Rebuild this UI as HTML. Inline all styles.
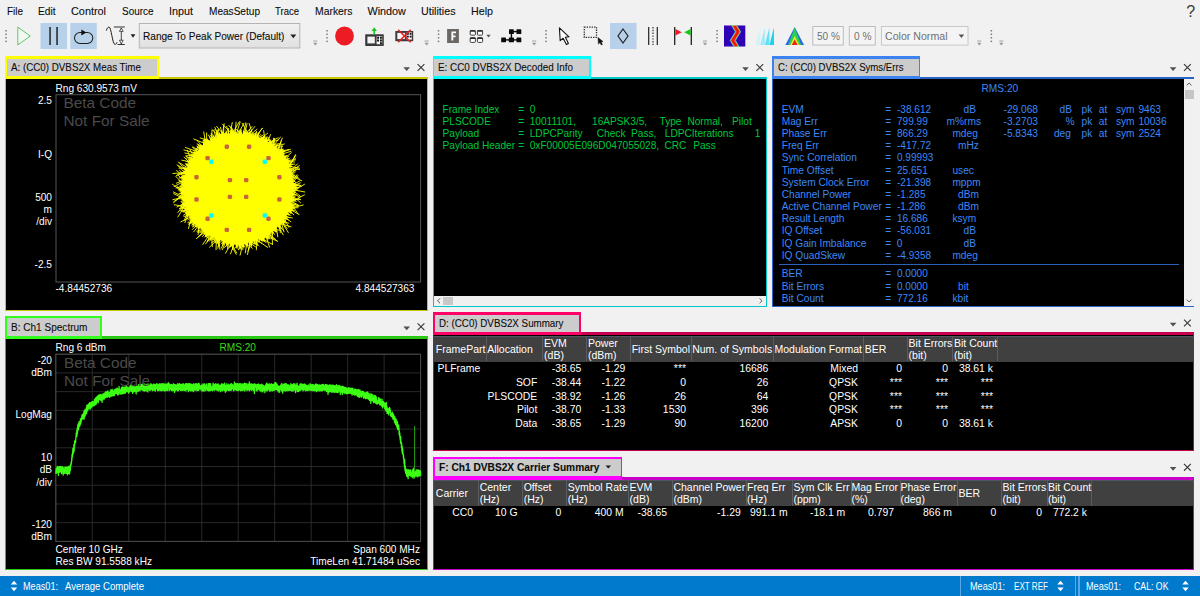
<!DOCTYPE html>
<html lang="en"><head><meta charset="utf-8"><title>VSA DVBS2X</title>
<style>
html,body{margin:0;padding:0;}
body{width:1200px;height:596px;overflow:hidden;background:#f1f1f1;position:relative;font-family:"Liberation Sans",sans-serif;color:#1e1e1e;}
.t{position:absolute;line-height:1;white-space:pre;transform-origin:0 0;}
.u{-webkit-text-stroke:0.1px currentColor;}
.b{position:absolute;}
svg{position:absolute;left:0;top:0;overflow:visible;}
</style></head><body>
<span class="t u" style="top:6px;font-size:10.8px;transform:scaleX(0.9194);left:7.00px;color:#0c0c0c;">File</span>
<span class="t u" style="top:6px;font-size:10.8px;transform:scaleX(0.9403);left:38.00px;color:#0c0c0c;">Edit</span>
<span class="t u" style="top:6px;font-size:10.8px;transform:scaleX(1.0053);left:71.00px;color:#0c0c0c;">Control</span>
<span class="t u" style="top:6px;font-size:10.8px;transform:scaleX(0.9205);left:121.50px;color:#0c0c0c;">Source</span>
<span class="t u" style="top:6px;font-size:10.8px;left:169.00px;color:#0c0c0c;">Input</span>
<span class="t u" style="top:6px;font-size:10.8px;transform:scaleX(0.9335);left:209.00px;color:#0c0c0c;">MeasSetup</span>
<span class="t u" style="top:6px;font-size:10.8px;transform:scaleX(0.8821);left:275.00px;color:#0c0c0c;">Trace</span>
<span class="t u" style="top:6px;font-size:10.8px;transform:scaleX(0.9614);left:314.50px;color:#0c0c0c;">Markers</span>
<span class="t u" style="top:6px;font-size:10.8px;left:367.50px;color:#0c0c0c;">Window</span>
<span class="t u" style="top:6px;font-size:10.8px;transform:scaleX(0.9912);left:421.00px;color:#0c0c0c;">Utilities</span>
<span class="t u" style="top:6px;font-size:10.8px;transform:scaleX(0.9904);left:471.00px;color:#0c0c0c;">Help</span>
<span class="t" style="top:4px;font-size:16px;left:1186.30px;color:#3a3a3a;">?</span>
<svg width="1200" height="596"><rect x="5.3" y="30.0" width="1.5" height="1.5" fill="#7c7c7c"/><rect x="5.3" y="33.55" width="1.5" height="1.5" fill="#7c7c7c"/><rect x="5.3" y="37.1" width="1.5" height="1.5" fill="#7c7c7c"/><rect x="5.3" y="40.65" width="1.5" height="1.5" fill="#7c7c7c"/><path d="M17.8 27.1 L30.3 36.1 L17.8 44.9 Z" fill="#f4f8f4" stroke="#46be50" stroke-width="0.85" stroke-linejoin="round"/><rect x="40.5" y="23" width="26.5" height="26" fill="#b8d1ea"/><rect x="49.3" y="27" width="1.5" height="18" fill="#222"/><rect x="56.3" y="27" width="1.5" height="18" fill="#222"/><rect x="70.3" y="23" width="26.5" height="26" fill="#b8d1ea"/><rect x="74.5" y="32.4" width="18.3" height="11" rx="5.5" fill="none" stroke="#1e1e1e" stroke-width="1.05"/><path d="M81.3 29.5 L86.4 32.4 L81.3 35.4 Z" fill="#111"/><path d="M106.3 30.6 C107.3 27.6 108.3 27 109 27 C111.4 27 112.3 44.4 115 44.4 C116 44.4 116.6 43.6 117.2 42.2" fill="none" stroke="#1e1e1e" stroke-width="1"/><path d="M113.8 27 H124.8 M117.6 44.5 H124.8" stroke="#1e1e1e" stroke-width="0.9"/><path d="M121.3 28 V44" stroke="#1e1e1e" stroke-width="0.8"/><path d="M121.3 28 L123.2 31.4 H119.4 Z M121.3 43.8 L123.2 40.2 H119.4 Z" fill="#f0f0f0" stroke="#1e1e1e" stroke-width="0.7"/><path d="M130.6 34.3 h4.8 l-2.4 3.4z" fill="#1e1e1e"/><defs><linearGradient id="cg" x1="0" y1="0" x2="0" y2="1"><stop offset="0" stop-color="#f1f1f1"/><stop offset="1" stop-color="#e0e0e0"/></linearGradient></defs><rect x="139.3" y="23.5" width="160.5" height="24.5" fill="url(#cg)" stroke="#b4b4b4" stroke-width="1"/><path d="M290.3 34.6 h6 l-3 3.6z" fill="#222"/><path d="M313.3 41 h4" stroke="#9a9a9a" stroke-width="0.9"/><path d="M313.1 42.8 h4.4 l-2.2 2.8z" fill="#9a9a9a"/><rect x="326.3" y="30.0" width="1.5" height="1.5" fill="#7c7c7c"/><rect x="326.3" y="33.55" width="1.5" height="1.5" fill="#7c7c7c"/><rect x="326.3" y="37.1" width="1.5" height="1.5" fill="#7c7c7c"/><rect x="326.3" y="40.65" width="1.5" height="1.5" fill="#7c7c7c"/><circle cx="344.5" cy="36" r="9.4" fill="#ed1c24"/><rect x="365.2" y="34.3" width="18.6" height="11.6" rx="0.6" fill="#3a3a3a"/><rect x="367.4" y="36.6" width="7.4" height="6.8" fill="#f4f4f4"/><rect x="376.6" y="36.2" width="5.6" height="8" fill="#f4f4f4"/><path d="M377.1 36.8h1.9v1.9h-1.9z M380 36.8h1.9v1.9h-1.9z M377.1 39.6h1.9v1.9h-1.9z M380 39.6h1.9v1.9h-1.9z M380 42.3h1.9v1.7h-1.9z" fill="#111"/><path d="M374.2 27.2 l2.8 3.8 h-2 v3.6 h-1.6 v-3.6 h-2z" fill="#1ec81e"/><rect x="395.3" y="30.9" width="17.9" height="10.3" rx="0.6" fill="#3c3c3c"/><rect x="397.3" y="32.9" width="7.6" height="6.2" fill="#f4f4f4"/><rect x="406.6" y="32.4" width="5.2" height="7.2" fill="#f4f4f4"/><path d="M407 33h1.8v1.8h-1.8z M409.7 33h1.8v1.8h-1.8z M407 35.8h1.8v1.8h-1.8z M409.7 35.8h1.8v1.8h-1.8z" fill="#111"/><path d="M398.2 29.7 L410.6 42.3 M410.6 29.7 L398.2 42.3" stroke="#ed1c24" stroke-width="1.5" fill="none"/><path d="M424.6 41 h4" stroke="#9a9a9a" stroke-width="0.9"/><path d="M424.40000000000003 42.8 h4.4 l-2.2 2.8z" fill="#9a9a9a"/><rect x="437.8" y="30.0" width="1.5" height="1.5" fill="#7c7c7c"/><rect x="437.8" y="33.55" width="1.5" height="1.5" fill="#7c7c7c"/><rect x="437.8" y="37.1" width="1.5" height="1.5" fill="#7c7c7c"/><rect x="437.8" y="40.65" width="1.5" height="1.5" fill="#7c7c7c"/><rect x="447.1" y="29" width="11.8" height="14" fill="#6a6764"/><path d="M451.4 32.4 h4.6 M452.3 31.6 v9 M451.6 36.4 h3.9" stroke="#fff" stroke-width="1.8" fill="none"/><rect x="470.2" y="30.5" width="5.2" height="4.7" rx="1" fill="#fff" stroke="#2a2a2a" stroke-width="0.9"/><rect x="469.9" y="30.2" width="5.8" height="1.5" rx="0.7" fill="#2a2a2a"/><rect x="477.4" y="30.5" width="5.2" height="4.7" rx="1" fill="#fff" stroke="#2a2a2a" stroke-width="0.9"/><rect x="477.09999999999997" y="30.2" width="5.8" height="1.5" rx="0.7" fill="#2a2a2a"/><rect x="470.2" y="37.7" width="5.2" height="4.7" rx="1" fill="#fff" stroke="#2a2a2a" stroke-width="0.9"/><rect x="469.9" y="37.400000000000006" width="5.8" height="1.5" rx="0.7" fill="#2a2a2a"/><rect x="477.4" y="37.7" width="5.2" height="4.7" rx="1" fill="#fff" stroke="#2a2a2a" stroke-width="0.9"/><rect x="477.09999999999997" y="37.400000000000006" width="5.8" height="1.5" rx="0.7" fill="#2a2a2a"/><path d="M486.4 34.8 h4.2 l-2.1 2.6z" fill="#505050"/><g fill="#0a0a0a"><rect x="509" y="29.2" width="4.8" height="4.8" rx="0.6"/><rect x="516.5" y="29.2" width="4.8" height="4.8" rx="0.6"/><rect x="501.2" y="37.5" width="4.8" height="4.8" rx="0.6"/><rect x="508.8" y="37.5" width="5.2" height="4.8" rx="0.6"/><rect x="516.5" y="37.5" width="4.8" height="4.8" rx="0.6"/><rect x="503" y="39.2" width="16" height="1.4"/><rect x="511" y="30.9" width="8" height="1.4"/><rect x="510.7" y="31" width="1.4" height="8"/></g><path d="M532.2 41 h4" stroke="#9a9a9a" stroke-width="0.9"/><path d="M532.0 42.8 h4.4 l-2.2 2.8z" fill="#9a9a9a"/><rect x="545.3" y="30.0" width="1.5" height="1.5" fill="#7c7c7c"/><rect x="545.3" y="33.55" width="1.5" height="1.5" fill="#7c7c7c"/><rect x="545.3" y="37.1" width="1.5" height="1.5" fill="#7c7c7c"/><rect x="545.3" y="40.65" width="1.5" height="1.5" fill="#7c7c7c"/><path d="M559.4 27.8 L560.2 40.6 L563.2 38.3 L566.4 44.5 L568.4 43.5 L565.4 37.3 L569 36.8 Z" fill="#fff" stroke="#111" stroke-width="1.1" stroke-linejoin="round"/><rect x="584.3" y="27.1" width="12.2" height="10.2" fill="none" stroke="#2a2a2a" stroke-width="1.3" stroke-dasharray="1.3 1.15"/><path d="M598 37.6 L598.4 44 L600 42.6 L601.2 45 L602.4 44.4 L601.2 42 L603 41.6 Z" fill="#111" stroke="#111" stroke-width="0.5"/><rect x="610" y="23" width="26.5" height="26" fill="#b8d1ea"/><path d="M623 29 L628 36 L623 43 L618 36 Z" fill="none" stroke="#222" stroke-width="1.2"/><path d="M648.7 27 v18 M657.3 27 v18" stroke="#222" stroke-width="1.2"/><path d="M653 27 v18" stroke="#222" stroke-width="1.1" stroke-dasharray="1.4 1.4"/><path d="M674.7 27 v18 M691.3 27 v18" stroke="#222" stroke-width="1.3"/><path d="M675.4 29 l6.4 3.2 l-6.4 3.2z" fill="#ed1c24"/><path d="M690.6 29 l-6.4 3.2 l6.4 3.2z" fill="#14c814"/><path d="M703 41 h4" stroke="#9a9a9a" stroke-width="0.9"/><path d="M702.8 42.8 h4.4 l-2.2 2.8z" fill="#9a9a9a"/><rect x="716.3" y="30.0" width="1.5" height="1.5" fill="#7c7c7c"/><rect x="716.3" y="33.55" width="1.5" height="1.5" fill="#7c7c7c"/><rect x="716.3" y="37.1" width="1.5" height="1.5" fill="#7c7c7c"/><rect x="716.3" y="40.65" width="1.5" height="1.5" fill="#7c7c7c"/><rect x="724" y="25.5" width="21.3" height="21" fill="#3000b4"/><path d="M731.6 25.5 L735.4 31.8 L730.2 40.4 L733.8 46.5 H739 L735.4 40.4 L740.6 31.8 L736.8 25.5 Z" fill="#f01414" stroke="#3cd2c8" stroke-width="1" stroke-linejoin="round"/><path d="M732.4 25.5 L736.1 31.8 L730.9 40.4 L734.5 46.5 H738.3 L734.7 40.4 L739.9 31.8 L736.1 25.5 Z" fill="#f01414" stroke="#e6dc28" stroke-width="0.5" stroke-linejoin="round"/><path d="M755.6 44.9 L760.2 27.2 V44.9 Z" fill="#d2f3fa"/><path d="M760.2 44.9 L764.8 27.2 V44.9 Z" fill="#a0eaf6"/><path d="M764.8 44.9 L769.4 27.2 V44.9 Z" fill="#64dff3"/><path d="M769.4 44.9 L774 27.2 V44.9 Z" fill="#1ed2f0"/><path d="M794.7 27 L804 45 H785.4 Z" fill="#2864f0"/><path d="M794.7 27.4 L801.2 45 H788.2 Z" fill="#28d250"/><path d="M794.7 33 L801 45 H788.4 Z" fill="#2864f0" opacity="0"/><path d="M794.7 36 L799.2 45 H790.2 Z" fill="#f0e61e"/><path d="M794.7 39.5 L797.6 45 H791.8 Z" fill="#ed1c24"/><rect x="812.8" y="26.5" width="30.5" height="18.6" fill="#f4f4f4" stroke="#bdbdbd"/><rect x="849.3" y="26.5" width="26" height="18.6" fill="#f4f4f4" stroke="#bdbdbd"/><rect x="881.5" y="26.5" width="86.5" height="18.6" fill="#f4f4f4" stroke="#c8c8c8"/><path d="M958.6 34.6 h5.6 l-2.8 3.4z" fill="#555"/><path d="M977.3 41 h4" stroke="#9a9a9a" stroke-width="0.9"/><path d="M977.0999999999999 42.8 h4.4 l-2.2 2.8z" fill="#9a9a9a"/><rect x="990.5999999999999" y="30.0" width="1.5" height="1.5" fill="#7c7c7c"/><rect x="990.5999999999999" y="33.55" width="1.5" height="1.5" fill="#7c7c7c"/><rect x="990.5999999999999" y="37.1" width="1.5" height="1.5" fill="#7c7c7c"/><rect x="990.5999999999999" y="40.65" width="1.5" height="1.5" fill="#7c7c7c"/><path d="M999.3 41 h4" stroke="#9a9a9a" stroke-width="0.9"/><path d="M999.0999999999999 42.8 h4.4 l-2.2 2.8z" fill="#9a9a9a"/></svg>
<span class="t u" style="top:31px;font-size:10.8px;transform:scaleX(0.9329);left:143.00px;color:#0c0c0c;">Range To Peak Power (Default)</span>
<span class="t" style="top:31px;font-size:10.8px;transform:scaleX(0.9343);left:816.50px;color:#707070;">50 %</span>
<span class="t" style="top:31px;font-size:10.8px;transform:scaleX(0.9404);left:853.50px;color:#707070;">0 %</span>
<span class="t" style="top:31px;font-size:10.8px;transform:scaleX(0.9825);left:885.00px;color:#707070;">Color Normal</span>
<div class="b" style="left:5.40px;top:76.70px;width:422.60px;height:233.90px;background:#c8c800;"></div>
<div class="b" style="left:6.40px;top:79.30px;width:420.60px;height:230.30px;background:#000;"></div>
<div class="b" style="left:5.40px;top:56.10px;width:153.30px;height:23.20px;background:#ffff00;"></div>
<div class="b" style="left:7.10px;top:58.80px;width:149.90px;height:17.60px;background:#cccccc;"></div>
<span class="t u" style="top:62px;font-size:10.8px;transform:scaleX(0.9063);left:11.00px;color:#0c0c0c;">A: (CC0) DVBS2X Meas Time</span>
<svg width="1200" height="596"><path d="M403.4 67.2 h6.6 l-3.3 3.8z" fill="#505050"/><path d="M417.6 64.1 l6.8 6.8 M424.4 64.1 l-6.8 6.8" stroke="#3a3a3a" stroke-width="1.15" fill="none"/></svg>
<div class="b" style="left:432.60px;top:76.70px;width:334.20px;height:230.30px;background:#00c8c8;"></div>
<div class="b" style="left:433.60px;top:79.30px;width:332.20px;height:226.70px;background:#000;"></div>
<div class="b" style="left:432.60px;top:56.10px;width:158.40px;height:23.20px;background:#00ffff;"></div>
<div class="b" style="left:434.30px;top:58.80px;width:155.00px;height:17.60px;background:#cccccc;"></div>
<span class="t u" style="top:62px;font-size:10.8px;transform:scaleX(0.9141);left:438.20px;color:#0c0c0c;">E: CC0 DVBS2X Decoded Info</span>
<svg width="1200" height="596"><path d="M742.1999999999999 67.2 h6.6 l-3.3 3.8z" fill="#505050"/><path d="M756.4 64.1 l6.8 6.8 M763.1999999999999 64.1 l-6.8 6.8" stroke="#3a3a3a" stroke-width="1.15" fill="none"/></svg>
<div class="b" style="left:772.30px;top:76.70px;width:422.10px;height:230.30px;background:#2864c8;"></div>
<div class="b" style="left:773.30px;top:79.30px;width:420.10px;height:226.70px;background:#000;"></div>
<div class="b" style="left:772.30px;top:56.10px;width:148.20px;height:23.20px;background:#3c82f0;"></div>
<div class="b" style="left:774.00px;top:58.80px;width:144.80px;height:17.60px;background:#cccccc;"></div>
<span class="t u" style="top:62px;font-size:10.8px;transform:scaleX(0.8899);left:777.50px;color:#0c0c0c;">C: (CC0) DVBS2X Syms/Errs</span>
<svg width="1200" height="596"><path d="M1169.8000000000002 67.2 h6.6 l-3.3 3.8z" fill="#505050"/><path d="M1184.0 64.1 l6.8 6.8 M1190.8000000000002 64.1 l-6.8 6.8" stroke="#3a3a3a" stroke-width="1.15" fill="none"/></svg>
<div class="b" style="left:5.40px;top:336.00px;width:422.60px;height:234.10px;background:#28c814;"></div>
<div class="b" style="left:6.40px;top:339.10px;width:420.60px;height:230.00px;background:#000;"></div>
<div class="b" style="left:5.40px;top:316.20px;width:96.60px;height:22.90px;background:#32ff1e;"></div>
<div class="b" style="left:7.10px;top:318.10px;width:93.20px;height:17.60px;background:#cccccc;"></div>
<span class="t u" style="top:322px;font-size:10.8px;transform:scaleX(0.9302);left:11.00px;color:#0c0c0c;">B: Ch1 Spectrum</span>
<svg width="1200" height="596"><path d="M403.4 326.49999999999994 h6.6 l-3.3 3.8z" fill="#505050"/><path d="M417.6 323.4 l6.8 6.8 M424.4 323.4 l-6.8 6.8" stroke="#3a3a3a" stroke-width="1.15" fill="none"/></svg>
<div class="b" style="left:432.80px;top:331.90px;width:761.60px;height:119.60px;background:#c80050;"></div>
<div class="b" style="left:433.80px;top:335.40px;width:759.60px;height:115.10px;background:#000;"></div>
<div class="b" style="left:432.80px;top:312.40px;width:147.80px;height:23.00px;background:#ff0066;"></div>
<div class="b" style="left:434.50px;top:314.60px;width:144.40px;height:17.00px;background:#cccccc;"></div>
<span class="t u" style="top:318px;font-size:10.8px;transform:scaleX(0.9059);left:438.50px;color:#0c0c0c;">D: (CC0) DVBS2X Summary</span>
<svg width="1200" height="596"><path d="M1169.8000000000002 322.7 h6.6 l-3.3 3.8z" fill="#505050"/><path d="M1184.0 319.6 l6.8 6.8 M1190.8000000000002 319.6 l-6.8 6.8" stroke="#3a3a3a" stroke-width="1.15" fill="none"/></svg>
<div class="b" style="left:432.80px;top:476.50px;width:761.60px;height:93.40px;background:#c800c8;"></div>
<div class="b" style="left:433.80px;top:479.60px;width:759.60px;height:89.30px;background:#000;"></div>
<div class="b" style="left:432.80px;top:456.70px;width:189.70px;height:22.90px;background:#ff00ff;"></div>
<div class="b" style="left:434.50px;top:458.70px;width:186.30px;height:17.50px;background:#cccccc;"></div>
<span class="t u" style="top:462px;font-size:10.8px;transform:scaleX(0.9416);left:438.50px;color:#0c0c0c;font-weight:bold;">F: Ch1 DVBS2X Carrier Summary</span>
<svg width="1200" height="596"><path d="M605.5 465.4 h5.6 l-2.8 3.2z" fill="#1e1e1e"/></svg>
<svg width="1200" height="596"><path d="M1169.8000000000002 467.04999999999995 h6.6 l-3.3 3.8z" fill="#505050"/><path d="M1184.0 463.95 l6.8 6.8 M1190.8000000000002 463.95 l-6.8 6.8" stroke="#3a3a3a" stroke-width="1.15" fill="none"/></svg>
<svg width="1200" height="596"><rect x="56" y="94.7" width="364.6" height="187.3" fill="none" stroke="#555" stroke-width="1"/><circle cx="238.2" cy="188.5" r="55" fill="#ffff00"/><path d="M287.6 196.2L293.2 188.4M287.7 181.6L295.7 189.0M287.6 180.8L293.9 189.9M287.8 182.4L298.1 190.6M286.4 201.8L295.5 191.3M288.2 189.0L305.2 192.0M287.4 197.3L293.6 192.5M287.6 181.0L295.3 193.0M285.6 204.4L304.8 194.7M285.6 204.5L292.8 194.7M288.2 187.2L300.9 196.6M285.8 203.8L295.8 195.7M288.2 189.4L300.2 197.7M285.8 203.9L299.6 198.3M285.1 205.9L293.5 198.3M287.2 198.5L301.0 199.6M287.2 198.2L297.5 199.7M288.1 191.2L292.0 200.2M288.1 191.5L300.9 203.0M288.1 191.5L296.4 201.8M285.3 205.2L291.7 201.5M283.3 210.1L303.6 204.9M287.1 198.8L299.1 205.5M286.4 201.9L298.8 206.0M287.2 198.3L296.7 205.4M281.6 213.4L293.7 205.9M284.2 208.1L298.4 207.7M287.5 196.8L290.5 206.3M287.3 197.8L291.0 207.6M285.1 205.9L294.3 208.7M285.2 205.7L289.8 207.5M281.8 213.0L294.8 210.3M285.4 204.9L293.2 210.4M284.9 206.3L299.4 214.7M287.4 197.4L298.1 214.2M286.5 201.6L291.0 212.1M285.7 204.1L291.9 213.7M285.0 206.2L294.1 215.2M285.9 203.5L291.0 214.0M286.0 203.2L288.0 214.0M284.4 207.6L288.6 215.4M280.1 215.8L292.7 218.0M282.6 211.5L287.4 216.2M280.8 214.7L289.8 217.8M282.7 211.3L285.7 216.6M277.5 219.4L285.2 217.2M281.2 214.0L287.3 219.2M280.7 214.8L291.2 222.0M282.1 212.5L284.4 218.4M277.7 219.2L289.1 223.4M277.6 219.2L283.2 220.2M283.1 210.6L285.6 221.6M275.3 222.0L291.4 226.9M280.8 214.7L282.2 221.8M281.9 212.9L281.8 222.2M281.4 213.7L289.0 227.6M282.3 212.0L281.1 222.9M279.1 217.3L287.3 228.9M282.0 212.7L280.4 223.9M275.1 222.2L280.8 224.8M278.9 217.5L288.5 232.8M274.5 222.9L278.9 225.9M276.2 221.0L283.1 230.4M279.6 216.5L284.1 232.2M268.9 227.9L281.4 230.7M280.8 214.7L279.5 229.3M275.4 221.9L283.4 235.1M279.9 216.1L280.3 233.2M275.4 221.9L275.7 228.8M270.4 226.8L275.2 229.8M262.9 232.0L275.3 229.6M262.6 232.1L275.0 230.4M277.3 219.6L274.5 231.2M274.9 222.5L273.2 231.1M275.6 221.7L277.8 237.2M258.9 234.0L272.8 232.9M260.0 233.5L277.8 241.3M265.3 230.5L277.7 241.6M260.7 233.1L275.3 238.9M261.7 232.6L271.0 233.8M273.4 224.0L272.0 238.0M256.1 235.2L269.8 235.0M261.9 232.5L270.0 236.5M261.8 232.6L270.3 239.2M271.8 225.5L272.5 244.7M255.6 235.4L272.8 244.5M259.7 233.6L267.7 238.3M268.1 228.6L265.8 236.5M269.2 227.7L267.6 240.9M264.2 231.2L269.7 247.5M254.8 235.7L266.5 242.6M255.9 235.2L265.0 241.4M251.9 236.6L268.2 247.7M256.9 234.9L262.2 239.1M265.6 230.3L263.1 240.7M267.1 229.3L261.3 239.9M256.6 235.0L260.4 240.3M251.5 236.7L262.0 243.6M264.7 230.9L259.4 241.5M261.1 233.0L258.9 241.5M252.1 236.5L259.0 242.4M250.2 237.0L259.3 246.0M243.0 238.3L257.8 245.3M250.6 236.9L257.3 245.0M243.4 238.2L256.8 247.7M248.7 237.4L255.9 243.9M257.6 234.6L256.3 250.2M254.6 235.7L254.3 244.2M248.4 237.4L253.8 244.1M247.7 237.6L252.0 243.0M260.8 233.1L251.2 242.6M240.1 238.5L252.7 248.5M246.1 237.9L250.6 244.1M254.5 235.8L249.6 242.4M251.3 236.8L249.3 246.0M241.0 238.4L248.3 243.1M245.1 238.0L248.8 249.5M254.2 235.9L247.7 251.5M239.4 238.5L246.2 242.9M251.5 236.7L247.4 254.9M236.4 238.5L245.3 247.1M247.8 237.6L245.2 253.3M254.0 235.9L244.0 244.0M236.1 238.5L243.2 250.1M251.8 236.6L241.9 243.8M245.0 238.0L241.3 243.4M237.8 238.5L241.1 249.7M244.1 238.2L240.0 255.5M248.6 237.4L239.7 243.5M245.2 238.0L239.0 249.6M234.5 238.4L238.7 250.3M244.8 238.1L237.5 244.0M227.1 237.2L236.9 253.2M227.0 237.2L236.4 254.7M224.5 236.6L235.2 244.6M246.0 237.9L234.5 243.9M246.1 237.9L234.0 248.6M233.1 238.2L232.4 249.9M227.5 237.3L232.9 243.6M225.3 236.8L232.0 243.2M236.1 238.5L230.4 254.2M235.9 238.4L231.1 244.0M232.1 238.1L230.6 243.7M239.1 238.5L228.8 247.7M221.0 235.4L229.4 243.4M228.2 237.5L227.5 249.4M234.3 238.3L225.3 253.5M230.9 238.0L225.9 246.6M237.0 238.5L226.2 243.2M234.2 238.3L223.8 247.9M222.2 235.9L224.5 242.6M227.6 237.4L222.1 250.1M225.8 236.9L221.3 248.5M233.5 238.3L223.1 242.9M218.4 234.4L219.9 249.7M228.3 237.5L220.7 244.0M218.8 234.6L218.8 247.0M220.1 235.1L217.8 248.7M226.2 237.0L219.3 242.9M216.6 233.6L216.0 250.1M220.7 235.3L217.3 243.1M218.3 234.4L217.1 243.4M209.0 229.1L216.0 243.4M209.1 229.2L216.3 239.2M211.5 230.8L212.3 247.0M214.9 232.7L215.7 239.2M227.9 237.4L214.6 238.5M221.5 235.6L209.2 247.5M208.8 228.9L212.7 239.3M222.0 235.8L211.2 242.8M211.8 230.9L212.5 237.2M224.3 236.5L210.8 240.1M217.7 234.1L211.3 237.2M210.7 230.2L207.7 241.8M214.7 232.6L205.4 244.2M215.6 233.1L206.6 241.6M221.9 235.8L207.3 237.3M211.9 231.0L202.5 244.8M208.4 228.7L206.4 236.4M219.0 234.7L207.4 235.2M208.7 228.9L205.9 235.5M213.9 232.2L205.5 234.3M211.6 230.8L206.0 233.7M209.8 229.6L204.5 233.0M209.8 229.6L202.0 236.8M212.0 231.1L202.7 234.1M203.1 224.2L203.3 232.1M208.6 228.8L196.0 238.9M207.0 227.6L197.9 237.2M200.2 221.0L198.0 234.9M212.1 231.2L199.5 232.1M211.5 230.8L201.1 230.1M212.9 231.6L196.9 232.1M198.5 218.9L198.3 230.7M207.6 228.1L196.5 231.3M198.5 218.9L199.3 227.7M201.2 222.2L193.4 232.2M205.4 226.3L197.6 227.8M194.8 213.3L196.0 227.3M200.5 221.3L192.1 229.8M207.6 228.0L195.2 226.3M194.0 211.8L193.6 226.5M201.0 221.9L192.0 227.1M201.8 222.8L194.6 224.1M193.5 210.9L188.4 228.8M201.4 222.3L195.2 222.8M194.9 213.5L191.7 223.7M195.6 214.7L188.5 224.8M196.2 215.7L189.7 224.3M195.2 214.1L193.5 220.6M201.2 222.1L187.5 222.8M198.7 219.2L190.7 220.0M191.5 206.4L184.7 223.0M199.7 220.3L191.6 217.7M191.9 207.3L190.4 218.1M190.8 204.5L184.1 220.8M195.4 214.4L180.5 222.1M190.6 203.8L186.9 218.3M199.9 220.6L188.3 216.1M192.2 208.0L189.6 215.2M189.9 201.3L186.7 215.8M195.5 214.5L183.6 216.5M194.0 211.9L186.1 214.4M192.7 209.2L183.3 215.4M189.3 198.9L177.7 217.2M190.3 202.9L186.1 212.2M190.2 202.5L183.2 212.5M192.1 208.0L186.0 210.2M189.2 198.7L177.6 212.7M196.8 216.6L180.9 210.6M194.0 212.0L180.1 210.7M189.5 199.9L181.6 209.7M191.3 205.8L179.0 208.7M188.7 195.8L179.9 208.8M194.6 212.9L181.1 207.0M188.8 196.5L180.6 206.7M189.8 200.9L176.6 207.1M189.0 197.6L184.4 203.8M188.4 192.9L182.2 204.2M192.0 207.7L173.8 204.7M192.0 207.7L181.1 202.1M188.2 188.2L173.3 203.1M188.2 189.3L183.4 200.8M188.4 193.0L173.5 201.7M188.2 190.0L176.7 199.9M188.2 187.1L180.8 198.5M188.8 196.0L172.4 199.8M189.5 200.0L183.8 197.0M189.6 200.3L183.8 196.7M189.8 201.1L183.4 196.1M188.2 189.4L182.5 194.9M188.2 188.4L183.5 193.9M189.2 198.2L182.7 194.3M190.0 201.9L173.3 193.5M188.7 195.2L183.1 192.2M189.6 200.3L173.1 191.8M188.2 186.6L180.1 191.2M189.0 179.6L178.3 190.2M189.5 199.8L182.5 189.4M188.3 184.7L179.0 189.6M188.4 184.4L175.6 188.1M188.2 190.2L176.9 187.6M189.2 178.6L173.8 186.7M188.9 196.7L176.6 186.0M188.3 190.9L179.7 185.9M189.3 177.9L180.7 185.4M188.9 196.9L172.1 184.0M189.3 178.3L176.0 183.3M188.6 194.4L183.0 183.7M188.3 185.5L183.2 182.4M188.3 185.7L183.2 182.1M188.3 185.6L178.5 180.6M189.5 177.1L181.6 180.7M188.4 192.7L179.4 179.8M189.1 178.9L183.1 178.7M190.6 173.1L179.3 178.2M192.0 169.5L175.9 175.8M188.2 189.5L175.6 176.1M190.9 172.3L172.5 173.5M188.2 186.8L177.3 174.1M188.6 182.3L184.6 174.9M189.2 178.7L178.2 173.2M191.9 169.7L181.1 173.1M189.0 179.5L176.2 170.4M188.4 183.7L185.1 173.2M192.8 167.7L185.5 171.8M189.0 179.4L179.2 170.0M192.2 168.9L178.5 168.1M190.1 175.0L186.1 170.7M189.7 176.4L183.3 167.9M189.4 177.5L178.2 165.8M190.9 172.3L176.7 164.8M189.9 175.5L185.5 167.1M190.3 174.3L179.6 163.3M191.7 170.1L177.9 161.9M196.8 160.5L188.0 165.3M191.0 172.1L187.2 164.4M196.7 160.6L188.0 164.7M195.1 163.2L181.4 160.1M191.2 171.3L188.9 163.7M194.4 164.3L189.6 162.6M192.4 168.5L188.2 161.7M191.2 171.6L189.5 161.3M193.4 166.3L183.8 156.9M201.1 155.0L186.1 158.2M197.3 159.7L188.4 158.0M195.9 161.9L185.3 155.8M201.2 154.9L185.9 155.8M194.0 165.2L191.6 158.0M199.9 156.3L184.5 152.9M192.6 168.1L191.3 156.4M201.2 154.8L183.5 149.8M204.9 151.2L193.8 155.7M193.6 165.8L187.2 149.9M202.5 153.5L185.2 147.4M205.1 151.1L193.1 153.2M193.8 165.5L193.8 152.7M196.4 161.1L189.9 149.5M199.2 157.2L194.4 152.1M195.4 162.7L194.0 149.7M201.7 154.3L192.3 147.3M199.7 156.6L195.6 149.2M203.3 152.7L192.4 146.7M200.9 155.2L198.7 150.2M195.6 162.2L196.6 148.0M205.5 150.6L199.5 149.3M209.4 147.7L197.4 147.0M199.7 156.6L197.1 145.8M207.3 149.2L197.6 144.7M207.3 149.2L196.8 143.7M211.4 146.3L193.4 138.8M205.7 150.5L196.9 140.2M211.0 146.6L202.7 145.7M209.6 147.5L203.6 145.6M208.4 148.4L203.8 144.9M202.5 153.5L203.7 143.8M217.1 143.2L199.8 137.8M215.0 144.2L205.4 144.2M213.1 145.3L202.7 140.1M203.1 152.9L204.1 139.4M215.0 144.2L204.2 139.2M201.8 154.2L204.5 139.1M212.0 145.9L208.5 142.2M209.1 147.8L207.5 141.0M207.8 148.8L208.2 140.7M206.6 149.7L203.7 131.5M221.6 141.3L210.0 141.2M206.7 149.7L206.6 132.5M214.5 144.5L208.2 134.7M223.5 140.7L211.9 139.2M216.9 143.3L210.1 134.7M208.6 148.2L213.2 139.5M218.1 142.7L213.7 139.0M214.3 144.6L211.1 132.9M209.5 147.6L214.6 137.2M211.7 146.1L212.0 129.9M223.5 140.7L211.7 129.2M217.2 143.1L213.8 129.8M225.6 140.1L214.6 129.1M221.8 141.3L214.7 127.1M220.0 141.9L216.3 132.2M228.0 139.6L218.1 135.2M227.6 139.6L216.4 126.1M212.1 145.9L217.9 129.6M234.2 138.7L221.1 134.4M214.1 144.7L219.0 128.8M224.5 140.4L220.3 127.0M221.4 141.4L222.9 134.5M216.6 143.4L222.6 132.8M222.4 141.0L223.5 131.3M236.7 138.5L222.1 123.9M217.8 142.9L225.7 132.4M223.6 140.7L223.8 125.3M221.3 141.5L224.2 123.4M220.3 141.8L227.1 131.5M230.1 139.2L226.6 126.0M221.0 141.5L229.3 134.2M228.2 139.5L228.6 128.1M239.2 138.5L228.7 125.2M237.5 138.5L231.0 133.5M237.9 138.5L230.8 126.3M240.9 138.6L232.0 131.1M229.1 139.3L232.3 122.2M238.0 138.5L233.2 132.8M233.8 138.7L234.6 132.3M236.4 138.5L234.7 130.5M247.1 139.3L235.1 128.3M234.8 138.6L236.1 121.8M230.2 139.1L236.5 132.6M239.3 138.5L237.8 132.4M232.3 138.8L238.7 130.4M228.9 139.4L239.5 121.4M234.8 138.6L240.3 121.5M233.1 138.8L240.1 132.6M236.3 138.5L241.3 130.2M252.8 140.7L242.0 122.9M236.1 138.5L242.1 132.1M235.3 138.6L244.1 123.0M250.4 140.0L243.3 131.6M242.1 138.6L245.9 122.4M251.0 140.2L244.3 133.8M239.5 138.5L245.4 133.2M243.4 138.8L247.2 123.2M246.6 139.2L247.0 133.2M254.9 141.4L249.0 123.1M252.8 140.7L249.3 129.5M256.2 141.8L248.8 132.0M246.0 139.1L250.1 132.8M258.9 143.0L249.7 134.7M241.6 138.6L252.3 126.3M242.7 138.7L252.4 130.5M238.8 138.5L251.9 134.7M244.6 138.9L255.0 126.3M252.2 140.5L254.0 132.9M248.3 139.5L253.7 135.6M252.4 140.6L256.7 131.2M245.2 139.0L257.2 129.1M244.3 138.9L257.3 132.5M243.4 138.8L257.2 134.5M246.2 139.1L257.4 135.9M253.6 140.9L259.6 132.6M253.6 140.9L262.3 128.0M251.8 140.4L262.9 127.9M254.4 141.2L261.0 134.2M266.0 147.0L263.6 130.3M264.3 145.9L261.4 136.8M258.2 142.7L262.2 137.3M253.1 140.8L263.6 134.8M250.7 140.1L262.8 137.6M256.6 142.0L263.9 137.5M256.6 142.0L268.0 132.9M251.6 140.3L266.6 136.9M257.6 142.4L265.0 140.2M272.7 152.3L268.2 137.1M257.7 142.5L267.1 139.2M265.7 146.7L270.6 134.2M271.9 151.6L269.6 138.7M268.7 148.9L268.3 142.2M257.3 142.3L269.2 140.3M257.5 142.4L269.3 142.6M273.2 152.8L273.5 137.9M273.4 153.0L274.6 138.0M268.3 148.6L272.4 141.0M267.6 148.1L273.1 141.4M261.5 144.2L271.7 144.8M263.5 145.3L278.5 137.6M275.8 155.5L273.1 144.4M269.9 149.8L280.8 136.7M262.6 144.9L278.5 139.9M275.2 154.9L282.5 137.7M263.1 145.1L277.1 145.2M276.4 156.3L281.5 140.3M271.9 151.6L276.4 147.6M279.2 159.9L276.6 148.7M263.6 145.5L281.4 143.5M274.7 154.3L278.8 148.5M281.0 162.6L281.8 145.1M268.0 148.3L284.7 143.9M270.5 150.3L282.9 146.2M268.9 149.1L279.2 151.6M271.1 150.8L282.5 149.0M273.6 153.2L279.8 152.0M267.9 148.3L283.5 149.6M268.9 149.0L282.2 152.3M279.9 160.9L284.8 150.3M270.4 150.3L285.3 151.1M272.9 152.5L289.1 149.6M274.7 154.3L290.8 149.3M275.4 155.1L283.0 156.3M276.1 155.9L291.4 151.2M274.7 154.3L285.2 156.0M280.6 161.9L291.6 152.4M282.4 165.1L288.7 155.9M280.3 161.5L285.5 158.4M278.1 158.3L285.8 158.7M285.8 173.2L295.6 154.4M279.6 160.5L287.0 159.9M285.2 171.4L296.0 155.1M281.9 164.1L290.3 159.9M284.5 169.6L295.9 157.7M285.8 173.2L292.1 160.8M285.7 173.0L291.5 161.5M280.1 161.2L296.0 159.8M279.9 160.9L294.9 162.0M278.8 159.3L289.7 164.8M287.0 177.8L291.2 164.2M283.3 167.0L292.8 164.4M282.1 164.6L295.2 164.1M286.4 175.2L297.8 163.6M282.8 165.8L292.5 166.6M286.5 175.5L291.5 168.5M286.1 174.2L299.7 165.4M286.9 177.3L298.6 167.1M286.5 175.5L290.5 170.6M282.5 165.2L299.9 168.3M283.5 167.3L299.9 169.7M284.3 169.1L296.3 170.9M285.5 172.3L295.5 172.1M287.8 182.3L292.8 173.2M287.6 180.8L291.8 174.9M288.2 187.9L297.2 174.4M286.3 174.9L295.4 175.2M288.2 189.5L298.2 175.3M288.2 187.3L294.0 176.5M287.6 180.6L294.1 177.8M284.0 168.5L292.8 178.0M287.0 177.4L293.0 179.5M284.9 170.6L299.4 178.6M287.8 182.4L293.3 179.9M286.8 176.7L292.9 181.0M288.2 187.3L300.2 180.7M285.9 173.4L302.1 180.9M285.6 172.6L296.1 182.8M288.2 188.4L300.7 182.7M287.8 194.5L304.9 184.0M288.2 189.1L299.5 184.5M287.7 195.6L301.2 185.1M287.7 181.5L301.6 186.3M287.9 182.9L295.3 187.5M288.2 187.1L298.9 187.8" stroke="#ffff00" stroke-width="0.9" fill="none"/><path d="M262.1 142.3L267.7 136.2L265.4 144.2ZM275.8 152.6L281.8 149.4L278.0 155.0ZM289.6 180.9L296.0 181.3L289.9 183.3ZM268.8 146.5L274.8 141.2L271.2 148.3ZM254.8 139.2L259.2 132.6L258.1 140.5ZM186.8 180.7L178.5 177.2L187.5 177.0ZM280.4 218.9L284.9 224.2L278.6 221.3ZM288.0 173.6L295.0 173.5L288.9 176.8ZM242.1 136.6L244.1 128.7L244.4 136.9ZM214.3 142.3L212.3 133.6L217.8 140.7ZM230.5 239.9L227.9 248.3L228.3 239.5ZM186.5 193.7L180.5 192.2L186.2 189.9ZM196.6 219.7L189.0 223.7L195.2 217.8ZM187.7 201.0L181.4 201.2L187.2 198.7ZM266.0 144.6L271.6 139.1L268.6 146.3ZM187.0 179.2L180.6 176.7L187.5 177.0ZM214.3 234.7L210.8 238.6L212.2 233.5ZM267.4 145.4L273.3 139.7L269.8 147.2ZM290.0 193.1L298.4 195.2L289.7 195.4ZM242.1 240.4L240.5 248.9L238.2 240.5ZM191.0 210.3L182.5 211.1L189.1 205.7ZM191.7 165.2L184.5 160.2L192.8 163.2ZM186.4 184.5L178.9 181.2L186.9 179.8ZM187.0 197.9L179.4 197.5L186.6 194.9ZM229.1 137.3L230.7 129.7L234.2 136.7ZM186.7 181.6L181.3 178.3L187.5 177.1ZM189.5 206.7L183.4 205.9L187.9 201.8ZM186.3 191.4L180.6 190.2L186.2 188.7ZM239.1 240.5L236.6 249.2L234.5 240.4ZM289.3 198.3L296.6 201.5L288.6 201.3ZM190.7 209.8L182.8 211.4L189.6 207.0ZM226.8 239.2L222.3 247.1L222.4 238.1ZM261.3 141.9L267.5 136.2L265.8 144.4ZM238.2 136.5L240.0 128.5L241.2 136.6ZM221.7 139.2L221.1 130.2L225.5 138.1ZM226.1 137.9L226.7 132.0L229.6 137.2ZM186.8 180.8L179.3 177.5L187.5 177.1ZM244.4 240.1L243.3 249.2L240.8 240.4ZM277.5 222.5L282.6 229.4L275.4 224.9ZM287.0 170.7L292.6 171.2L288.4 174.9ZM215.0 142.0L212.6 134.4L216.9 141.0ZM186.2 188.6L179.2 186.9L186.3 185.6ZM283.2 214.6L288.7 219.9L281.5 217.3ZM289.8 182.1L295.9 183.2L290.1 185.4ZM208.8 145.6L206.9 140.2L211.0 144.2ZM283.5 214.0L289.5 220.4L281.1 217.9ZM277.8 222.2L280.9 227.9L275.0 225.2ZM287.2 205.8L291.7 208.9L286.3 208.3ZM244.7 136.9L247.9 131.3L249.0 137.6ZM266.9 231.9L269.0 239.4L263.3 234.0ZM203.5 149.8L201.2 144.2L206.2 147.5ZM238.9 240.5L237.2 246.8L235.8 240.4ZM281.1 159.1L286.8 157.3L282.9 161.9ZM246.3 137.1L249.6 132.3L250.8 138.0ZM279.8 157.2L287.4 155.1L282.5 161.3ZM189.1 205.5L180.5 205.3L187.6 200.5ZM186.4 192.6L179.4 190.3L186.2 187.6ZM219.3 140.1L218.5 132.9L222.4 139.0ZM225.8 138.0L225.7 128.9L229.3 137.3ZM187.8 201.3L180.7 201.8L187.3 199.1ZM259.6 141.1L265.0 134.9L263.2 142.9ZM219.7 139.9L218.7 131.5L223.0 138.8ZM190.6 167.5L186.1 163.2L192.3 164.1ZM206.7 147.1L203.6 140.4L208.9 145.5ZM230.7 240.0L228.1 244.8L227.4 239.4ZM191.4 165.8L186.7 161.0L193.4 162.2ZM200.3 224.1L194.3 227.7L198.5 222.1ZM187.0 179.3L181.5 176.8L187.6 176.6ZM192.1 212.6L184.5 214.2L190.5 209.3ZM247.5 239.7L246.4 247.2L243.3 240.2ZM252.6 238.5L251.6 244.4L248.0 239.6ZM211.2 233.0L205.8 238.1L208.2 231.0ZM186.3 186.0L180.1 184.2L186.4 183.4ZM219.3 140.1L219.2 131.9L224.0 138.5ZM186.3 191.1L177.8 189.4L186.2 187.4ZM289.9 183.0L295.7 184.1L290.1 186.0ZM242.8 136.7L245.5 130.3L246.6 137.2ZM276.7 153.6L281.9 150.6L278.2 155.3ZM290.1 191.7L297.3 195.0L289.6 196.7ZM243.3 240.2L242.1 247.4L239.9 240.5ZM186.4 193.1L178.0 191.0L186.2 188.2ZM192.2 164.3L187.4 158.7L194.6 160.1ZM190.1 208.2L183.6 208.7L188.8 204.9ZM208.9 145.6L207.6 139.3L212.6 143.2ZM203.3 227.0L198.1 229.3L200.2 224.0ZM275.5 152.2L283.7 148.4L278.9 156.1ZM288.6 201.5L296.4 206.5L287.1 206.2ZM277.0 153.9L282.3 152.3L279.7 157.2ZM256.4 237.2L257.8 245.8L253.6 238.2ZM287.6 204.8L293.8 209.4L286.1 208.7ZM187.1 178.9L180.8 176.4L187.6 176.6ZM227.6 137.6L228.7 132.3L231.4 136.9ZM281.8 216.8L286.3 222.4L279.6 220.0ZM240.9 240.4L239.6 248.5L238.0 240.5ZM271.2 148.3L277.2 144.8L274.4 151.2ZM189.0 205.3L182.6 206.1L188.3 203.1ZM197.4 156.3L194.5 151.6L199.7 153.6ZM195.8 218.6L189.8 220.8L194.2 216.2ZM186.6 195.0L177.9 193.4L186.2 190.4ZM221.8 237.9L217.3 244.1L218.0 236.4ZM228.1 137.5L227.9 129.9L230.3 137.1ZM271.6 228.3L275.6 235.7L269.3 230.1ZM190.2 168.6L186.2 164.7L191.8 165.1ZM227.0 239.3L224.7 244.1L224.9 238.8ZM244.1 240.2L242.4 247.4L239.7 240.5ZM289.5 196.9L296.1 199.8L288.9 200.0ZM196.8 157.0L191.5 151.2L198.3 155.2ZM241.1 240.4L239.2 249.0L237.0 240.5ZM265.5 232.7L267.7 239.8L262.7 234.4ZM269.1 230.3L271.3 236.9L266.0 232.4ZM208.3 145.9L204.8 138.0L210.8 144.3ZM289.9 182.6L296.5 184.2L290.2 186.7ZM198.4 221.9L191.7 224.4L195.8 218.6ZM234.4 136.6L235.2 131.3L236.6 136.5ZM209.8 232.1L204.8 236.2L207.0 230.1ZM286.6 169.6L293.0 168.8L287.6 172.2ZM191.7 211.8L185.3 213.0L190.3 208.8ZM186.6 182.3L181.5 179.3L187.3 178.0ZM202.1 151.1L198.0 143.9L204.7 148.8ZM263.7 233.8L265.2 242.0L259.5 236.0ZM277.9 154.9L284.8 150.9L279.4 156.8ZM225.4 238.9L222.2 246.1L223.2 238.3ZM229.7 239.8L226.1 245.8L225.2 238.9ZM289.8 195.3L295.5 198.3L289.1 199.3ZM290.2 187.9L296.4 190.2L290.1 192.2ZM187.8 201.2L179.7 201.5L187.2 198.4ZM224.4 138.4L225.1 132.4L228.3 137.4ZM249.6 137.8L252.3 133.0L252.5 138.5ZM213.8 234.4L208.7 241.3L211.8 233.3ZM194.7 217.0L186.5 220.8L193.5 215.0ZM287.6 172.3L293.2 172.6L288.6 175.9ZM189.3 206.2L181.5 207.2L188.4 203.4ZM187.3 199.0L178.7 199.2L186.8 196.4ZM278.5 155.6L283.6 153.4L280.1 157.7ZM248.1 239.5L247.8 246.9L245.1 240.0ZM187.4 199.6L182.0 199.1L186.8 196.7ZM290.2 188.1L295.7 190.3L290.1 192.2ZM189.2 171.2L183.1 167.8L189.9 169.2ZM238.8 136.5L241.3 131.2L243.1 136.7ZM195.5 218.2L187.8 221.9L194.2 216.2ZM209.3 231.8L204.2 234.5L205.3 228.8ZM198.4 155.0L194.5 149.8L200.2 153.1ZM277.7 154.7L283.4 151.5L279.2 156.6ZM187.7 200.9L180.9 199.9L186.8 196.4ZM287.4 205.5L294.0 210.7L285.6 210.0ZM287.3 205.7L293.7 210.6L285.7 209.8ZM239.0 136.5L241.2 128.1L242.5 136.7ZM205.5 148.1L202.4 141.2L208.2 146.0ZM274.3 226.0L277.7 232.6L271.5 228.5ZM210.8 232.7L204.3 237.9L206.8 230.0ZM186.2 187.4L179.8 185.2L186.4 183.7ZM231.8 136.9L233.6 130.5L236.4 136.5ZM208.9 145.5L206.4 137.8L212.2 143.4ZM286.5 207.7L292.5 213.0L284.6 212.0ZM211.6 143.8L208.6 135.9L213.8 142.6ZM189.0 205.4L180.7 205.2L187.6 200.6ZM283.9 213.2L288.3 217.4L282.5 215.7ZM238.5 240.5L236.6 248.1L235.2 240.4ZM283.3 162.6L291.1 160.8L285.2 166.3ZM280.8 158.7L288.5 154.9L282.0 160.5ZM193.1 214.4L185.3 216.0L191.1 210.6ZM279.9 157.5L285.8 155.7L282.0 160.5ZM279.5 157.0L284.8 154.5L280.8 158.7ZM192.5 213.3L186.9 214.9L191.5 211.3ZM198.6 222.2L191.4 225.3L196.1 219.0ZM269.3 146.8L274.2 142.9L271.6 148.6ZM279.7 157.2L285.2 155.8L282.0 160.5ZM273.1 227.0L277.5 233.9L271.3 228.6ZM262.9 142.7L268.2 138.7L267.1 145.3ZM202.0 151.2L197.5 144.3L204.0 149.4ZM212.2 143.5L210.1 135.9L215.2 141.9ZM188.5 173.2L182.5 168.5L190.1 168.7ZM290.1 186.0L298.5 187.7L290.2 189.7ZM281.6 217.2L286.2 223.8L278.5 221.3ZM250.9 238.9L250.8 244.6L248.3 239.5ZM282.9 215.1L288.2 220.0L281.5 217.4ZM275.8 152.5L283.8 148.7L278.9 156.1ZM186.9 180.0L180.6 176.6L187.7 175.9ZM195.7 218.5L189.0 221.6L194.4 216.6ZM188.3 174.0L181.8 170.4L189.1 171.3ZM262.5 234.5L263.2 241.7L258.1 236.6ZM290.1 184.7L298.0 185.9L290.2 187.8ZM214.7 234.9L209.3 241.9L212.2 233.5ZM194.9 159.7L189.3 153.9L196.6 157.3ZM283.6 163.1L290.2 162.7L285.9 167.7ZM222.1 139.0L222.1 131.6L225.9 138.0ZM278.0 155.1L285.3 150.6L279.4 156.8ZM218.1 236.5L214.5 240.4L215.1 235.1ZM222.1 139.1L222.1 132.2L225.7 138.0ZM266.4 232.2L268.1 238.0L263.8 233.8ZM238.8 240.5L236.3 248.3L234.3 240.4ZM220.9 237.5L216.4 244.8L218.0 236.4ZM262.3 142.4L267.8 136.5L265.5 144.2ZM242.9 136.7L245.2 128.8L245.6 137.0ZM279.3 156.6L285.1 153.7L280.6 158.4ZM290.0 183.7L299.1 185.3L290.2 187.9ZM288.8 200.4L293.1 203.9L287.6 204.7ZM217.1 141.0L216.5 132.2L221.9 139.1ZM200.8 152.3L196.2 145.3L203.1 150.1ZM195.8 218.6L188.7 221.5L194.1 216.1ZM207.4 146.6L204.0 138.5L210.3 144.6ZM277.3 154.3L284.5 150.2L279.2 156.5ZM286.3 208.2L291.2 212.6L284.7 211.8ZM191.8 164.9L187.9 160.3L193.9 161.3ZM217.6 236.3L213.8 241.7L215.4 235.2ZM223.9 138.5L223.8 132.3L226.6 137.8ZM278.0 155.0L284.4 152.9L280.8 158.6ZM287.5 205.1L293.3 209.6L286.0 209.0ZM222.3 139.0L221.6 132.0L224.8 138.3ZM187.8 175.9L179.9 172.1L188.6 173.0ZM195.8 218.6L188.5 221.5L194.0 215.9ZM206.5 147.3L203.6 141.1L208.6 145.8ZM186.9 196.8L181.5 196.3L186.5 194.5ZM192.1 212.6L185.4 213.3L190.2 208.5ZM287.9 203.7L293.3 207.7L286.6 207.5ZM190.4 168.1L184.4 163.1L192.0 164.6ZM288.5 175.2L294.7 175.7L289.3 178.8ZM285.3 210.5L291.7 215.9L283.6 213.9ZM288.6 175.6L294.3 176.2L289.4 179.2ZM234.8 240.4L231.5 246.8L229.8 239.8ZM246.4 239.8L245.5 245.6L243.1 240.3ZM233.5 240.3L230.2 248.1L229.2 239.7ZM235.3 240.4L233.1 248.6L232.4 240.2ZM286.9 206.9L291.4 210.9L285.3 210.4ZM244.4 136.9L246.8 129.3L247.0 137.2ZM198.9 222.5L191.1 226.1L196.3 219.3ZM241.6 136.6L244.5 131.2L246.2 137.1ZM264.5 233.4L265.4 238.8L261.3 235.1ZM205.2 148.3L202.1 141.2L208.1 146.1ZM261.2 235.1L262.6 242.5L258.0 236.6ZM290.2 187.2L296.3 188.8L290.2 190.4ZM229.9 137.2L231.5 128.0L235.0 136.6ZM189.9 169.2L185.0 164.3L191.9 164.8ZM252.8 138.6L256.9 130.6L255.6 139.5ZM290.1 185.7L297.6 187.7L290.2 189.8ZM244.6 240.1L244.2 248.9L242.1 240.4ZM217.0 141.0L215.9 132.0L221.3 139.3ZM252.3 238.5L252.1 247.8L247.8 239.6ZM290.0 184.5L298.4 186.8L290.2 189.6ZM249.9 239.2L249.7 245.2L247.1 239.7ZM187.2 198.9L181.2 197.3L186.5 194.0ZM263.1 142.8L267.5 138.0L265.6 144.3ZM273.5 226.7L276.2 232.1L271.3 228.6ZM218.9 236.8L214.8 243.5L216.8 235.9ZM189.2 171.1L182.0 166.8L190.2 168.5ZM201.4 151.8L199.1 145.6L205.0 148.5ZM186.3 190.8L179.7 188.3L186.3 185.8ZM186.3 185.4L179.9 183.5L186.5 182.8ZM279.1 220.6L283.2 225.4L277.7 222.3ZM271.2 148.4L278.8 143.5L274.7 151.5ZM186.7 195.8L180.1 195.0L186.4 192.8ZM273.2 227.0L276.1 232.6L270.9 228.9ZM186.2 189.3L180.5 187.3L186.3 185.6ZM186.3 191.1L180.6 189.2L186.2 187.2ZM280.3 157.9L288.0 155.0L282.4 161.0ZM240.6 240.4L239.3 248.4L237.8 240.5ZM267.2 145.3L271.9 141.1L269.4 146.9ZM245.9 137.1L248.4 131.6L248.9 137.6ZM219.6 139.9L219.0 133.2L222.7 138.9ZM281.6 159.8L290.3 157.7L284.2 164.3Z" fill="#ffff00"/><rect x="224.6" y="144.5" width="4.4" height="4.4" rx="1.4" fill="#c8643c"/><rect x="246.9" y="144.5" width="4.4" height="4.4" rx="1.4" fill="#c8643c"/><rect x="205.4" y="155.9" width="4.4" height="4.4" rx="1.4" fill="#c8643c"/><rect x="266.3" y="155.9" width="4.4" height="4.4" rx="1.4" fill="#c8643c"/><rect x="194.3" y="175.1" width="4.4" height="4.4" rx="1.4" fill="#c8643c"/><rect x="277.2" y="175.1" width="4.4" height="4.4" rx="1.4" fill="#c8643c"/><rect x="194.3" y="197.3" width="4.4" height="4.4" rx="1.4" fill="#c8643c"/><rect x="277.2" y="197.3" width="4.4" height="4.4" rx="1.4" fill="#c8643c"/><rect x="205.4" y="216.5" width="4.4" height="4.4" rx="1.4" fill="#c8643c"/><rect x="266.3" y="216.5" width="4.4" height="4.4" rx="1.4" fill="#c8643c"/><rect x="224.6" y="227.7" width="4.4" height="4.4" rx="1.4" fill="#c8643c"/><rect x="246.9" y="227.7" width="4.4" height="4.4" rx="1.4" fill="#c8643c"/><rect x="227.7" y="177.9" width="4.4" height="4.4" rx="1.4" fill="#c8643c"/><rect x="244.0" y="177.9" width="4.4" height="4.4" rx="1.4" fill="#c8643c"/><rect x="227.7" y="194.7" width="4.4" height="4.4" rx="1.4" fill="#c8643c"/><rect x="244.0" y="194.7" width="4.4" height="4.4" rx="1.4" fill="#c8643c"/><rect x="209.3" y="159.6" width="4.4" height="4.4" rx="1.4" fill="#00ffff"/><rect x="262.6" y="159.6" width="4.4" height="4.4" rx="1.4" fill="#00ffff"/><rect x="209.3" y="213.3" width="4.4" height="4.4" rx="1.4" fill="#00ffff"/><rect x="262.6" y="213.3" width="4.4" height="4.4" rx="1.4" fill="#00ffff"/></svg>
<svg width="1200" height="596"><path d="M55.80 354.2V541.4M55.8 354.20H420.6M92.28 354.2V541.4M55.8 372.92H420.6M128.76 354.2V541.4M55.8 391.64H420.6M165.24 354.2V541.4M55.8 410.36H420.6M201.72 354.2V541.4M55.8 429.08H420.6M238.20 354.2V541.4M55.8 447.80H420.6M274.68 354.2V541.4M55.8 466.52H420.6M311.16 354.2V541.4M55.8 485.24H420.6M347.64 354.2V541.4M55.8 503.96H420.6M384.12 354.2V541.4M55.8 522.68H420.6M420.60 354.2V541.4M55.8 541.40H420.6" stroke="#333" stroke-width="0.8" fill="none"/><rect x="55.8" y="354.2" width="364.8" height="187.2" fill="none" stroke="#4a4a4a" stroke-width="1"/><path d="M55.8 470.4L55.9 470.7L56.0 473.4L56.1 472.4L56.3 468.4L56.4 471.4L56.5 470.1L56.6 469.9L56.7 473.0L56.8 472.7L56.9 470.6L57.1 467.5L57.2 469.5L57.3 467.4L57.4 466.4L57.5 468.4L57.6 472.3L57.7 469.8L57.9 472.5L58.0 471.1L58.1 466.8L58.2 468.3L58.3 466.8L58.4 475.5L58.5 470.0L58.6 469.8L58.8 468.6L58.9 471.0L59.0 468.2L59.1 468.3L59.2 470.8L59.3 470.0L59.4 472.2L59.6 466.6L59.7 470.3L59.8 471.4L59.9 472.3L60.0 470.7L60.1 470.0L60.2 466.3L60.4 468.6L60.5 467.7L60.6 469.6L60.7 471.1L60.8 468.5L60.9 471.3L61.0 466.4L61.2 467.6L61.3 467.1L61.4 470.4L61.5 473.7L61.6 467.3L61.7 470.1L61.8 470.8L62.0 471.5L62.1 470.4L62.2 466.7L62.3 468.8L62.4 471.4L62.5 471.7L62.6 466.8L62.8 470.9L62.9 473.8L63.0 472.6L63.1 473.1L63.2 475.2L63.3 467.7L63.4 473.6L63.6 472.6L63.7 473.0L63.8 471.1L63.9 473.2L64.0 470.2L64.1 469.3L64.2 471.2L64.3 471.8L64.5 469.9L64.6 472.6L64.7 471.5L64.8 467.1L64.9 472.6L65.0 473.3L65.1 471.9L65.3 471.8L65.4 469.9L65.5 467.9L65.6 467.5L65.7 472.5L65.8 469.3L65.9 471.0L66.1 473.3L66.2 467.0L66.3 468.9L66.4 470.9L66.5 471.5L66.6 467.9L66.7 471.0L66.9 473.3L67.0 470.9L67.1 467.1L67.2 467.9L67.3 473.1L67.4 474.8L67.5 469.5L67.7 469.5L67.8 469.8L67.9 473.2L68.0 467.2L68.1 470.3L68.2 473.7L68.3 466.3L68.5 470.7L68.6 471.5L68.7 468.3L68.8 471.0L68.9 468.8L69.0 473.1L69.1 467.5L69.3 474.1L69.4 469.8L69.5 470.2L69.6 472.4L69.7 473.3L69.8 465.8L69.9 471.1L70.0 468.3L70.2 468.8L70.3 470.8L70.4 466.9L70.5 464.8L70.6 465.8L70.7 464.4L70.8 466.3L71.0 462.5L71.1 465.0L71.2 462.4L71.3 463.0L71.4 463.1L71.5 461.1L71.6 461.5L71.8 457.4L71.9 460.2L72.0 454.4L72.1 454.6L72.2 456.3L72.3 454.0L72.4 456.9L72.6 452.0L72.7 453.1L72.8 450.5L72.9 448.2L73.0 454.5L73.1 450.5L73.2 449.6L73.4 451.5L73.5 451.9L73.6 452.7L73.7 450.8L73.8 450.5L73.9 444.3L74.0 450.6L74.2 451.0L74.3 444.5L74.4 445.1L74.5 446.5L74.6 440.8L74.7 444.7L74.8 442.5L75.0 442.8L75.1 441.3L75.2 442.2L75.3 442.5L75.4 441.9L75.5 443.0L75.6 442.2L75.8 438.6L75.9 437.0L76.0 437.0L76.1 435.0L76.2 432.8L76.3 433.4L76.4 433.7L76.5 435.4L76.7 434.1L76.8 430.2L76.9 436.5L77.0 433.2L77.1 429.8L77.2 433.9L77.3 427.7L77.5 433.3L77.6 430.6L77.7 430.4L77.8 425.1L77.9 426.2L78.0 429.1L78.1 424.1L78.3 426.8L78.4 425.6L78.5 429.8L78.6 429.6L78.7 425.7L78.8 423.3L78.9 427.8L79.1 421.5L79.2 422.6L79.3 423.7L79.4 426.0L79.5 426.2L79.6 422.9L79.7 422.4L79.9 422.9L80.0 425.8L80.1 422.8L80.2 422.6L80.3 423.1L80.4 418.8L80.5 419.5L80.7 424.0L80.8 423.8L80.9 418.6L81.0 419.9L81.1 421.7L81.2 422.0L81.3 418.1L81.4 419.0L81.6 420.1L81.7 417.1L81.8 419.4L81.9 416.4L82.0 414.9L82.1 418.2L82.2 415.8L82.4 414.6L82.5 417.0L82.6 418.8L82.7 416.9L82.8 415.7L82.9 418.1L83.0 418.7L83.2 413.8L83.3 418.9L83.4 415.8L83.5 417.3L83.6 414.7L83.7 414.3L83.8 414.5L84.0 410.9L84.1 419.2L84.2 417.1L84.3 416.7L84.4 412.8L84.5 411.3L84.6 410.8L84.8 416.6L84.9 413.9L85.0 415.9L85.1 409.2L85.2 410.9L85.3 412.1L85.4 415.2L85.6 410.8L85.7 413.2L85.8 411.3L85.9 411.9L86.0 413.8L86.1 413.9L86.2 412.4L86.4 407.7L86.5 413.1L86.6 413.6L86.7 412.7L86.8 405.2L86.9 407.6L87.0 409.5L87.2 408.2L87.3 407.5L87.4 410.9L87.5 409.0L87.6 409.0L87.7 410.8L87.8 407.8L87.9 407.7L88.1 404.6L88.2 407.2L88.3 404.2L88.4 407.8L88.5 409.0L88.6 406.4L88.7 406.4L88.9 408.1L89.0 405.7L89.1 403.9L89.2 404.2L89.3 407.3L89.4 403.1L89.5 407.3L89.7 407.6L89.8 406.8L89.9 402.5L90.0 404.8L90.1 409.3L90.2 407.2L90.3 408.4L90.5 405.3L90.6 402.9L90.7 405.2L90.8 407.9L90.9 403.1L91.0 407.4L91.1 403.5L91.3 405.5L91.4 402.1L91.5 407.2L91.6 407.1L91.7 404.6L91.8 402.9L91.9 407.2L92.1 406.2L92.2 402.0L92.3 406.2L92.4 404.2L92.5 403.3L92.6 405.9L92.7 405.6L92.8 401.4L93.0 404.5L93.1 402.1L93.2 403.4L93.3 401.9L93.4 405.4L93.5 404.8L93.6 403.9L93.8 405.4L93.9 405.9L94.0 404.3L94.1 405.2L94.2 405.7L94.3 400.7L94.4 399.6L94.6 404.6L94.7 401.2L94.8 403.2L94.9 400.9L95.0 400.2L95.1 399.1L95.2 404.7L95.4 397.9L95.5 404.4L95.6 400.2L95.7 399.2L95.8 403.9L95.9 404.6L96.0 400.7L96.2 402.3L96.3 402.7L96.4 401.4L96.5 403.3L96.6 397.5L96.7 401.9L96.8 399.3L97.0 400.1L97.1 396.2L97.2 396.2L97.3 401.1L97.4 396.8L97.5 397.3L97.6 398.8L97.8 401.6L97.9 401.9L98.0 396.7L98.1 402.6L98.2 402.9L98.3 399.9L98.4 395.2L98.5 399.2L98.7 400.3L98.8 396.2L98.9 399.3L99.0 397.0L99.1 399.1L99.2 398.3L99.3 394.9L99.5 399.5L99.6 398.7L99.7 397.8L99.8 395.1L99.9 394.9L100.0 399.4L100.1 394.6L100.3 395.6L100.4 394.5L100.5 395.8L100.6 399.8L100.7 394.8L100.8 400.5L100.9 397.2L101.1 394.3L101.2 397.7L101.3 400.3L101.4 395.3L101.5 399.0L101.6 395.8L101.7 395.9L101.9 395.9L102.0 396.5L102.1 402.4L102.2 397.5L102.3 395.4L102.4 399.9L102.5 395.5L102.7 398.6L102.8 395.6L102.9 393.8L103.0 397.9L103.1 396.2L103.2 393.9L103.3 397.2L103.5 393.9L103.6 396.9L103.7 398.2L103.8 397.0L103.9 399.7L104.0 397.6L104.1 397.6L104.2 399.0L104.4 393.6L104.5 395.3L104.6 394.9L104.7 393.6L104.8 396.8L104.9 396.6L105.0 392.4L105.2 396.0L105.3 397.9L105.4 397.4L105.5 394.4L105.6 391.8L105.7 396.2L105.8 392.8L106.0 393.4L106.1 392.0L106.2 394.9L106.3 392.9L106.4 393.2L106.5 393.0L106.6 395.5L106.8 397.5L106.9 397.4L107.0 396.7L107.1 391.3L107.2 397.2L107.3 396.6L107.4 393.8L107.6 391.9L107.7 397.0L107.8 395.2L107.9 390.9L108.0 396.7L108.1 393.7L108.2 395.7L108.4 392.3L108.5 393.5L108.6 396.3L108.7 395.2L108.8 392.7L108.9 394.9L109.0 396.1L109.2 392.1L109.3 393.8L109.4 395.7L109.5 397.3L109.6 394.9L109.7 396.5L109.8 395.2L109.9 396.2L110.1 396.9L110.2 393.0L110.3 393.1L110.4 392.9L110.5 394.4L110.6 390.6L110.7 389.8L110.9 395.7L111.0 391.4L111.1 393.3L111.2 395.9L111.3 393.7L111.4 391.1L111.5 396.2L111.7 396.1L111.8 391.6L111.9 389.7L112.0 389.9L112.1 395.8L112.2 389.2L112.3 390.3L112.5 393.6L112.6 394.0L112.7 394.2L112.8 394.6L112.9 392.1L113.0 392.5L113.1 395.7L113.3 390.9L113.4 394.3L113.5 395.6L113.6 391.1L113.7 392.4L113.8 391.9L113.9 391.5L114.1 393.9L114.2 395.7L114.3 391.4L114.4 389.7L114.5 395.2L114.6 390.8L114.7 390.2L114.9 390.8L115.0 393.1L115.1 393.7L115.2 392.4L115.3 389.6L115.4 391.2L115.5 392.9L115.7 389.3L115.8 388.8L115.9 389.6L116.0 391.6L116.1 390.8L116.2 393.4L116.3 390.6L116.4 391.9L116.6 390.0L116.7 392.7L116.8 390.2L116.9 393.3L117.0 393.7L117.1 387.9L117.2 390.9L117.4 391.6L117.5 391.9L117.6 394.9L117.7 393.9L117.8 390.7L117.9 388.8L118.0 391.3L118.2 392.3L118.3 392.5L118.4 393.2L118.5 389.4L118.6 393.1L118.7 393.9L118.8 394.6L119.0 391.4L119.1 386.5L119.2 392.0L119.3 390.9L119.4 388.8L119.5 392.0L119.6 389.6L119.8 391.1L119.9 390.9L120.0 391.5L120.1 393.3L120.2 391.9L120.3 391.8L120.4 391.0L120.6 389.7L120.7 392.1L120.8 393.3L120.9 391.8L121.0 394.3L121.1 389.0L121.2 390.4L121.3 393.4L121.5 387.3L121.6 391.9L121.7 387.8L121.8 392.7L121.9 391.5L122.0 392.1L122.1 393.9L122.3 393.8L122.4 392.4L122.5 386.8L122.6 393.3L122.7 390.6L122.8 388.1L122.9 392.8L123.1 392.0L123.2 391.7L123.3 393.5L123.4 389.2L123.5 387.8L123.6 387.5L123.7 390.0L123.9 387.9L124.0 393.1L124.1 388.6L124.2 387.2L124.3 389.0L124.4 393.3L124.5 387.9L124.7 387.4L124.8 390.2L124.9 389.2L125.0 389.6L125.1 392.2L125.2 389.6L125.3 393.2L125.5 389.7L125.6 386.9L125.7 389.4L125.8 390.1L125.9 388.3L126.0 391.9L126.1 389.8L126.3 385.7L126.4 391.6L126.5 388.2L126.6 390.7L126.7 387.2L126.8 389.7L126.9 391.5L127.0 387.9L127.2 390.4L127.3 387.5L127.4 388.5L127.5 387.0L127.6 388.5L127.7 389.5L127.8 390.1L128.0 389.6L128.1 392.2L128.2 391.7L128.3 389.8L128.4 388.6L128.5 388.8L128.6 393.2L128.8 387.4L128.9 388.3L129.0 391.5L129.1 387.3L129.2 390.2L129.3 387.0L129.4 388.6L129.6 391.8L129.7 391.4L129.8 390.1L129.9 387.3L130.0 387.9L130.1 390.6L130.2 385.8L130.4 387.2L130.5 387.7L130.6 385.2L130.7 388.6L130.8 388.5L130.9 389.5L131.0 386.1L131.2 390.6L131.3 391.4L131.4 385.1L131.5 390.7L131.6 390.7L131.7 388.8L131.8 389.9L132.0 389.1L132.1 389.6L132.2 385.5L132.3 387.4L132.4 387.9L132.5 388.3L132.6 393.4L132.8 391.5L132.9 388.2L133.0 389.6L133.1 391.8L133.2 387.6L133.3 391.9L133.4 390.1L133.5 386.6L133.7 389.7L133.8 386.8L133.9 390.9L134.0 387.3L134.1 391.0L134.2 387.5L134.3 390.3L134.5 391.1L134.6 390.1L134.7 391.7L134.8 389.4L134.9 387.7L135.0 386.5L135.1 386.9L135.3 386.9L135.4 391.6L135.5 391.1L135.6 390.8L135.7 388.5L135.8 386.9L135.9 390.2L136.1 391.4L136.2 394.1L136.3 386.1L136.4 391.3L136.5 388.7L136.6 387.7L136.7 385.8L136.9 390.3L137.0 389.4L137.1 389.8L137.2 385.5L137.3 388.5L137.4 386.3L137.5 391.7L137.7 386.0L137.8 389.5L137.9 387.5L138.0 386.5L138.1 391.2L138.2 388.3L138.3 391.0L138.4 386.5L138.6 384.6L138.7 387.5L138.8 388.6L138.9 390.7L139.0 388.0L139.1 388.6L139.2 384.9L139.4 384.7L139.5 388.2L139.6 386.6L139.7 386.5L139.8 386.6L139.9 384.8L140.0 390.8L140.2 388.7L140.3 386.4L140.4 386.3L140.5 384.4L140.6 384.0L140.7 389.5L140.8 389.6L141.0 387.1L141.1 388.2L141.2 385.6L141.3 385.8L141.4 389.6L141.5 386.9L141.6 384.4L141.8 388.8L141.9 384.8L142.0 385.2L142.1 387.0L142.2 389.6L142.3 384.1L142.4 384.4L142.6 387.9L142.7 390.3L142.8 387.3L142.9 386.1L143.0 386.7L143.1 386.9L143.2 387.6L143.4 390.5L143.5 385.4L143.6 386.8L143.7 386.0L143.8 384.2L143.9 386.8L144.0 389.2L144.1 391.0L144.3 387.7L144.4 384.0L144.5 385.0L144.6 387.4L144.7 391.1L144.8 390.8L144.9 384.5L145.1 390.0L145.2 386.2L145.3 390.5L145.4 390.6L145.5 385.5L145.6 388.2L145.7 388.0L145.9 386.8L146.0 388.4L146.1 385.2L146.2 386.4L146.3 389.3L146.4 384.7L146.5 390.9L146.7 384.3L146.8 388.4L146.9 390.6L147.0 388.9L147.1 385.2L147.2 387.9L147.3 386.1L147.5 387.7L147.6 388.2L147.7 389.2L147.8 391.9L147.9 385.0L148.0 384.0L148.1 386.3L148.3 388.4L148.4 388.2L148.5 384.1L148.6 384.5L148.7 386.6L148.8 389.0L148.9 389.3L149.1 386.0L149.2 390.1L149.3 387.2L149.4 386.7L149.5 390.1L149.6 385.2L149.7 390.5L149.8 385.3L150.0 385.1L150.1 386.5L150.2 390.5L150.3 385.8L150.4 385.5L150.5 389.6L150.6 389.3L150.8 383.7L150.9 386.9L151.0 385.4L151.1 385.0L151.2 383.9L151.3 387.7L151.4 386.5L151.6 388.6L151.7 389.5L151.8 386.6L151.9 384.8L152.0 385.1L152.1 389.4L152.2 385.4L152.4 390.7L152.5 388.8L152.6 388.4L152.7 389.6L152.8 384.9L152.9 388.6L153.0 389.9L153.2 387.9L153.3 389.5L153.4 388.5L153.5 384.3L153.6 390.1L153.7 385.5L153.8 386.9L154.0 384.2L154.1 388.6L154.2 387.8L154.3 389.7L154.4 390.1L154.5 385.0L154.6 384.3L154.8 386.3L154.9 390.5L155.0 388.2L155.1 390.0L155.2 390.3L155.3 389.8L155.4 391.0L155.6 384.6L155.7 388.9L155.8 389.3L155.9 389.0L156.0 387.1L156.1 387.0L156.2 386.9L156.3 386.1L156.5 385.2L156.6 383.9L156.7 383.6L156.8 387.2L156.9 388.4L157.0 386.5L157.1 384.5L157.3 384.0L157.4 389.2L157.5 390.3L157.6 390.7L157.7 384.7L157.8 386.5L157.9 389.3L158.1 386.7L158.2 389.2L158.3 385.9L158.4 389.6L158.5 385.3L158.6 385.0L158.7 390.6L158.9 387.8L159.0 384.4L159.1 384.6L159.2 388.0L159.3 383.7L159.4 388.5L159.5 384.0L159.7 384.3L159.8 384.9L159.9 387.9L160.0 389.0L160.1 390.4L160.2 385.7L160.3 385.5L160.5 386.8L160.6 384.5L160.7 388.9L160.8 385.0L160.9 384.9L161.0 383.6L161.1 390.8L161.2 388.7L161.4 386.9L161.5 387.3L161.6 387.6L161.7 384.1L161.8 390.7L161.9 390.4L162.0 389.3L162.2 386.6L162.3 383.7L162.4 383.9L162.5 384.3L162.6 385.8L162.7 389.6L162.8 386.0L163.0 390.2L163.1 383.9L163.2 388.7L163.3 384.3L163.4 387.7L163.5 388.7L163.6 389.1L163.8 384.4L163.9 384.5L164.0 383.7L164.1 390.9L164.2 387.2L164.3 385.1L164.4 387.3L164.6 384.5L164.7 384.6L164.8 387.4L164.9 385.6L165.0 390.3L165.1 386.3L165.2 389.1L165.4 388.5L165.5 388.3L165.6 390.8L165.7 384.0L165.8 390.4L165.9 390.3L166.0 387.4L166.2 390.5L166.3 386.7L166.4 386.6L166.5 387.7L166.6 384.0L166.7 388.2L166.8 390.0L166.9 387.8L167.1 386.5L167.2 386.5L167.3 384.7L167.4 387.7L167.5 390.6L167.6 385.8L167.7 383.7L167.9 383.6L168.0 384.1L168.1 385.4L168.2 384.5L168.3 382.5L168.4 387.0L168.5 387.6L168.7 383.8L168.8 384.6L168.9 384.8L169.0 390.5L169.1 387.9L169.2 383.7L169.3 390.5L169.5 385.9L169.6 387.7L169.7 385.7L169.8 388.7L169.9 385.9L170.0 385.0L170.1 389.9L170.3 388.2L170.4 387.3L170.5 384.7L170.6 385.2L170.7 388.1L170.8 386.1L170.9 384.9L171.1 388.7L171.2 385.0L171.3 389.8L171.4 384.6L171.5 387.5L171.6 390.5L171.7 384.7L171.9 388.8L172.0 390.0L172.1 385.9L172.2 388.1L172.3 390.8L172.4 386.9L172.5 387.3L172.6 385.0L172.8 387.6L172.9 387.4L173.0 384.8L173.1 389.4L173.2 386.2L173.3 383.7L173.4 384.9L173.6 390.5L173.7 387.3L173.8 388.0L173.9 389.4L174.0 389.6L174.1 386.7L174.2 389.1L174.4 388.5L174.5 392.5L174.6 384.3L174.7 385.5L174.8 389.7L174.9 390.2L175.0 390.2L175.2 388.1L175.3 388.9L175.4 385.2L175.5 390.7L175.6 385.7L175.7 385.2L175.8 384.9L176.0 384.6L176.1 389.9L176.2 385.3L176.3 386.8L176.4 385.1L176.5 387.8L176.6 387.2L176.8 388.5L176.9 387.9L177.0 385.5L177.1 389.1L177.2 386.1L177.3 386.3L177.4 390.0L177.6 390.8L177.7 383.8L177.8 383.7L177.9 390.9L178.0 386.4L178.1 384.1L178.2 385.2L178.3 386.1L178.5 390.5L178.6 385.9L178.7 388.6L178.8 389.3L178.9 384.3L179.0 385.7L179.1 385.3L179.3 383.6L179.4 385.7L179.5 388.3L179.6 386.6L179.7 384.7L179.8 389.4L179.9 384.7L180.1 384.1L180.2 386.0L180.3 386.4L180.4 385.7L180.5 386.3L180.6 390.5L180.7 385.9L180.9 386.6L181.0 389.4L181.1 389.4L181.2 386.3L181.3 384.3L181.4 385.8L181.5 390.3L181.7 385.9L181.8 384.4L181.9 388.3L182.0 386.5L182.1 387.3L182.2 387.1L182.3 387.3L182.5 385.7L182.6 388.0L182.7 390.4L182.8 384.2L182.9 389.8L183.0 386.0L183.1 383.4L183.3 388.0L183.4 389.6L183.5 386.7L183.6 385.3L183.7 387.6L183.8 384.8L183.9 390.1L184.1 387.3L184.2 390.5L184.3 388.4L184.4 386.9L184.5 384.9L184.6 386.8L184.7 390.0L184.8 390.4L185.0 386.2L185.1 384.3L185.2 385.6L185.3 384.3L185.4 387.0L185.5 383.7L185.6 389.5L185.8 388.1L185.9 383.7L186.0 390.9L186.1 389.7L186.2 388.5L186.3 386.5L186.4 388.9L186.6 383.6L186.7 386.0L186.8 386.4L186.9 385.7L187.0 384.7L187.1 384.7L187.2 387.8L187.4 383.8L187.5 389.6L187.6 388.6L187.7 385.3L187.8 383.9L187.9 384.3L188.0 384.2L188.2 389.2L188.3 388.6L188.4 391.7L188.5 385.1L188.6 388.6L188.7 388.7L188.8 383.5L189.0 388.4L189.1 384.1L189.2 386.6L189.3 390.3L189.4 385.0L189.5 383.7L189.6 383.6L189.8 385.0L189.9 385.8L190.0 389.1L190.1 388.2L190.2 390.3L190.3 384.4L190.4 386.2L190.5 388.3L190.7 389.2L190.8 390.9L190.9 384.0L191.0 385.5L191.1 388.7L191.2 388.6L191.3 390.5L191.5 384.4L191.6 384.8L191.7 390.7L191.8 389.2L191.9 386.3L192.0 386.2L192.1 387.1L192.3 390.6L192.4 390.3L192.5 384.5L192.6 390.0L192.7 386.3L192.8 390.6L192.9 389.5L193.1 388.7L193.2 387.8L193.3 387.9L193.4 391.6L193.5 390.8L193.6 383.7L193.7 387.9L193.9 389.7L194.0 389.5L194.1 384.9L194.2 385.0L194.3 389.9L194.4 389.9L194.5 386.5L194.7 390.1L194.8 388.6L194.9 387.7L195.0 387.6L195.1 387.1L195.2 383.7L195.3 383.6L195.4 385.7L195.6 383.9L195.7 385.0L195.8 387.5L195.9 385.9L196.0 386.7L196.1 390.7L196.2 385.9L196.4 389.0L196.5 384.7L196.6 385.2L196.7 383.6L196.8 389.7L196.9 385.7L197.0 386.7L197.2 389.1L197.3 384.9L197.4 385.5L197.5 386.9L197.6 390.5L197.7 384.1L197.8 385.3L198.0 388.3L198.1 386.6L198.2 383.6L198.3 386.5L198.4 389.7L198.5 389.9L198.6 390.4L198.8 386.6L198.9 383.1L199.0 386.8L199.1 386.3L199.2 383.8L199.3 386.8L199.4 389.1L199.6 388.8L199.7 385.2L199.8 385.4L199.9 388.5L200.0 386.7L200.1 387.6L200.2 388.8L200.4 386.2L200.5 387.4L200.6 388.5L200.7 388.3L200.8 386.9L200.9 385.8L201.0 390.1L201.1 388.4L201.3 387.7L201.4 388.4L201.5 385.0L201.6 387.7L201.7 385.4L201.8 387.4L201.9 386.9L202.1 390.9L202.2 387.9L202.3 387.9L202.4 386.7L202.5 390.9L202.6 390.7L202.7 389.2L202.9 383.9L203.0 385.1L203.1 385.4L203.2 387.7L203.3 390.2L203.4 388.7L203.5 384.4L203.7 386.1L203.8 385.5L203.9 391.3L204.0 390.7L204.1 384.0L204.2 384.3L204.3 384.3L204.5 383.8L204.6 386.0L204.7 386.7L204.8 389.7L204.9 384.6L205.0 384.6L205.1 385.2L205.3 386.7L205.4 389.6L205.5 387.0L205.6 390.7L205.7 386.7L205.8 390.2L205.9 388.5L206.1 386.3L206.2 386.4L206.3 389.1L206.4 387.5L206.5 383.8L206.6 389.2L206.7 387.4L206.9 388.6L207.0 388.0L207.1 389.3L207.2 388.6L207.3 390.3L207.4 388.1L207.5 389.8L207.6 387.8L207.8 390.3L207.9 385.5L208.0 385.3L208.1 384.3L208.2 386.3L208.3 383.6L208.4 390.6L208.6 390.9L208.7 390.1L208.8 390.7L208.9 386.9L209.0 389.3L209.1 385.0L209.2 387.3L209.4 383.6L209.5 383.7L209.6 388.1L209.7 388.3L209.8 390.5L209.9 383.6L210.0 385.9L210.2 385.9L210.3 390.5L210.4 386.0L210.5 383.6L210.6 385.0L210.7 390.6L210.8 386.9L211.0 390.1L211.1 388.8L211.2 385.9L211.3 387.1L211.4 386.7L211.5 387.4L211.6 387.1L211.8 390.1L211.9 389.0L212.0 389.1L212.1 389.7L212.2 388.0L212.3 390.0L212.4 387.0L212.6 390.6L212.7 387.8L212.8 386.3L212.9 384.2L213.0 384.0L213.1 383.0L213.2 383.8L213.3 383.8L213.5 389.7L213.6 387.8L213.7 388.3L213.8 388.6L213.9 388.1L214.0 388.1L214.1 385.3L214.3 390.4L214.4 384.9L214.5 387.7L214.6 384.7L214.7 387.7L214.8 386.1L214.9 389.6L215.1 387.6L215.2 387.2L215.3 387.7L215.4 383.9L215.5 389.1L215.6 385.2L215.7 383.7L215.9 384.9L216.0 384.0L216.1 388.1L216.2 385.6L216.3 389.8L216.4 387.0L216.5 386.0L216.7 384.6L216.8 389.9L216.9 387.5L217.0 384.4L217.1 384.1L217.2 390.4L217.3 390.0L217.5 388.0L217.6 386.7L217.7 386.4L217.8 390.2L217.9 388.8L218.0 389.4L218.1 389.1L218.2 383.9L218.4 386.0L218.5 385.7L218.6 390.9L218.7 389.5L218.8 389.3L218.9 386.1L219.0 387.4L219.2 390.1L219.3 390.1L219.4 385.1L219.5 388.5L219.6 387.9L219.7 388.0L219.8 385.6L220.0 389.8L220.1 389.7L220.2 388.6L220.3 387.1L220.4 385.6L220.5 391.7L220.6 389.3L220.8 385.0L220.9 386.7L221.0 387.5L221.1 389.9L221.2 387.6L221.3 386.6L221.4 384.3L221.6 385.8L221.7 383.8L221.8 383.6L221.9 390.8L222.0 383.6L222.1 389.1L222.2 388.7L222.4 390.3L222.5 387.9L222.6 385.5L222.7 390.6L222.8 389.8L222.9 387.7L223.0 384.3L223.2 389.3L223.3 390.0L223.4 384.2L223.5 385.3L223.6 389.6L223.7 386.7L223.8 386.5L223.9 388.3L224.1 390.1L224.2 386.7L224.3 388.2L224.4 390.3L224.5 389.8L224.6 383.2L224.7 387.9L224.9 390.1L225.0 385.5L225.1 385.3L225.2 387.2L225.3 392.3L225.4 388.0L225.5 386.8L225.7 389.3L225.8 386.1L225.9 385.1L226.0 388.5L226.1 385.3L226.2 389.8L226.3 389.9L226.5 387.0L226.6 390.9L226.7 388.1L226.8 388.0L226.9 383.7L227.0 386.0L227.1 389.1L227.3 389.7L227.4 387.8L227.5 385.1L227.6 388.9L227.7 385.1L227.8 386.6L227.9 390.0L228.1 389.5L228.2 388.7L228.3 389.5L228.4 386.8L228.5 390.4L228.6 386.5L228.7 385.2L228.9 384.2L229.0 385.1L229.1 386.9L229.2 386.5L229.3 390.5L229.4 387.8L229.5 388.6L229.6 387.6L229.8 388.5L229.9 390.5L230.0 387.7L230.1 385.1L230.2 388.8L230.3 390.1L230.4 385.4L230.6 384.0L230.7 390.1L230.8 390.1L230.9 387.2L231.0 387.9L231.1 385.0L231.2 388.8L231.4 383.7L231.5 390.1L231.6 389.5L231.7 385.0L231.8 385.3L231.9 386.0L232.0 387.2L232.2 387.0L232.3 387.7L232.4 384.3L232.5 388.7L232.6 387.4L232.7 388.4L232.8 388.2L233.0 385.9L233.1 388.2L233.2 387.6L233.3 389.1L233.4 386.9L233.5 385.7L233.6 390.7L233.8 387.2L233.9 387.2L234.0 384.3L234.1 384.0L234.2 386.5L234.3 390.1L234.4 382.0L234.6 385.2L234.7 387.0L234.8 383.8L234.9 389.8L235.0 385.0L235.1 387.6L235.2 385.8L235.4 385.5L235.5 386.6L235.6 389.5L235.7 383.6L235.8 383.7L235.9 387.9L236.0 385.5L236.1 384.8L236.3 383.4L236.4 389.4L236.5 390.3L236.6 390.3L236.7 387.3L236.8 388.2L236.9 390.0L237.1 390.3L237.2 386.3L237.3 385.2L237.4 386.8L237.5 383.7L237.6 389.1L237.7 385.6L237.9 390.0L238.0 390.5L238.1 388.4L238.2 389.4L238.3 387.1L238.4 388.2L238.5 384.0L238.7 387.8L238.8 390.3L238.9 389.6L239.0 385.5L239.1 387.3L239.2 385.6L239.3 385.3L239.5 383.7L239.6 389.7L239.7 389.7L239.8 387.8L239.9 387.8L240.0 388.2L240.1 383.9L240.3 385.5L240.4 388.8L240.5 384.9L240.6 390.7L240.7 387.9L240.8 383.7L240.9 386.2L241.1 387.1L241.2 387.6L241.3 385.4L241.4 388.2L241.5 386.0L241.6 388.5L241.7 390.5L241.8 389.5L242.0 385.7L242.1 387.7L242.2 383.8L242.3 386.1L242.4 386.9L242.5 385.0L242.6 387.2L242.8 390.5L242.9 385.7L243.0 385.3L243.1 388.8L243.2 384.6L243.3 384.1L243.4 387.9L243.6 386.8L243.7 389.0L243.8 387.6L243.9 389.8L244.0 383.8L244.1 384.6L244.2 386.7L244.4 388.4L244.5 383.0L244.6 386.8L244.7 390.9L244.8 387.4L244.9 388.8L245.0 384.0L245.2 390.1L245.3 388.5L245.4 385.0L245.5 387.8L245.6 387.8L245.7 383.5L245.8 384.2L246.0 386.0L246.1 387.6L246.2 388.3L246.3 383.7L246.4 389.0L246.5 388.0L246.6 388.0L246.8 386.1L246.9 388.1L247.0 390.6L247.1 388.0L247.2 388.9L247.3 388.8L247.4 386.0L247.5 385.2L247.7 386.8L247.8 383.9L247.9 388.4L248.0 384.5L248.1 390.0L248.2 384.9L248.3 389.6L248.5 384.4L248.6 385.1L248.7 384.3L248.8 388.2L248.9 384.1L249.0 385.7L249.1 388.8L249.3 381.9L249.4 390.7L249.5 389.1L249.6 388.8L249.7 385.9L249.8 383.8L249.9 384.6L250.1 385.1L250.2 385.6L250.3 386.8L250.4 384.2L250.5 383.8L250.6 385.6L250.7 389.4L250.9 386.4L251.0 384.7L251.1 387.7L251.2 390.2L251.3 383.9L251.4 388.8L251.5 386.6L251.7 389.9L251.8 386.8L251.9 384.0L252.0 390.1L252.1 388.5L252.2 386.9L252.3 387.1L252.4 384.7L252.6 386.3L252.7 384.7L252.8 385.1L252.9 388.4L253.0 389.5L253.1 384.5L253.2 384.2L253.4 385.8L253.5 389.9L253.6 390.4L253.7 389.8L253.8 386.0L253.9 388.7L254.0 388.4L254.2 387.9L254.3 383.9L254.4 393.5L254.5 387.2L254.6 384.6L254.7 384.9L254.8 387.1L255.0 384.5L255.1 384.0L255.2 385.3L255.3 385.5L255.4 384.8L255.5 384.4L255.6 385.2L255.8 386.2L255.9 385.3L256.0 388.5L256.1 390.8L256.2 386.0L256.3 390.4L256.4 389.2L256.6 387.2L256.7 386.8L256.8 389.1L256.9 384.5L257.0 389.4L257.1 390.8L257.2 384.6L257.4 388.3L257.5 386.8L257.6 386.6L257.7 389.7L257.8 388.8L257.9 388.9L258.0 384.7L258.1 384.1L258.3 386.1L258.4 384.1L258.5 384.0L258.6 385.2L258.7 387.5L258.8 386.5L258.9 386.5L259.1 388.7L259.2 390.0L259.3 387.7L259.4 389.8L259.5 389.8L259.6 390.1L259.7 389.0L259.9 384.3L260.0 385.4L260.1 388.7L260.2 390.4L260.3 390.1L260.4 387.7L260.5 386.5L260.7 390.8L260.8 384.9L260.9 390.3L261.0 390.4L261.1 391.7L261.2 390.3L261.3 390.3L261.5 385.0L261.6 386.5L261.7 388.8L261.8 386.7L261.9 384.1L262.0 384.8L262.1 386.1L262.3 390.7L262.4 390.4L262.5 386.8L262.6 389.3L262.7 385.0L262.8 392.0L262.9 387.7L263.1 385.5L263.2 390.3L263.3 389.2L263.4 389.5L263.5 389.4L263.6 388.2L263.7 385.4L263.9 390.4L264.0 390.3L264.1 386.3L264.2 388.5L264.3 388.2L264.4 387.6L264.5 390.2L264.6 386.4L264.8 390.2L264.9 392.6L265.0 388.5L265.1 385.9L265.2 387.7L265.3 388.3L265.4 387.9L265.6 388.8L265.7 389.7L265.8 388.1L265.9 384.2L266.0 387.0L266.1 387.3L266.2 390.6L266.4 388.9L266.5 383.2L266.6 384.5L266.7 386.4L266.8 384.4L266.9 388.2L267.0 385.8L267.2 386.0L267.3 390.9L267.4 384.7L267.5 387.4L267.6 384.8L267.7 384.1L267.8 384.0L268.0 388.1L268.1 387.7L268.2 388.3L268.3 389.1L268.4 389.4L268.5 388.7L268.6 387.4L268.8 384.4L268.9 385.5L269.0 386.4L269.1 383.9L269.2 386.2L269.3 390.4L269.4 383.9L269.6 384.1L269.7 390.0L269.8 387.1L269.9 388.6L270.0 391.1L270.1 386.6L270.2 384.7L270.3 388.9L270.5 389.3L270.6 388.3L270.7 385.7L270.8 390.6L270.9 390.8L271.0 389.2L271.1 389.0L271.3 383.6L271.4 386.6L271.5 387.9L271.6 385.0L271.7 388.5L271.8 389.8L271.9 388.8L272.1 387.2L272.2 390.4L272.3 390.9L272.4 385.2L272.5 387.4L272.6 384.3L272.7 384.5L272.9 384.3L273.0 384.7L273.1 390.5L273.2 385.0L273.3 386.0L273.4 389.6L273.5 389.4L273.7 384.1L273.8 386.0L273.9 387.3L274.0 389.8L274.1 389.7L274.2 385.1L274.3 390.3L274.5 384.0L274.6 386.6L274.7 388.7L274.8 387.7L274.9 385.3L275.0 382.5L275.1 386.9L275.2 387.4L275.4 384.6L275.5 389.8L275.6 388.0L275.7 388.6L275.8 382.5L275.9 384.2L276.0 383.6L276.2 388.1L276.3 386.6L276.4 383.9L276.5 383.6L276.6 384.2L276.7 389.7L276.8 385.9L277.0 384.3L277.1 387.5L277.2 387.1L277.3 384.7L277.4 385.6L277.5 389.5L277.6 390.7L277.8 388.4L277.9 389.1L278.0 390.8L278.1 386.5L278.2 388.2L278.3 389.1L278.4 385.8L278.6 387.3L278.7 386.3L278.8 386.5L278.9 389.2L279.0 392.4L279.1 390.5L279.2 387.3L279.4 386.5L279.5 390.9L279.6 390.8L279.7 391.9L279.8 386.7L279.9 389.7L280.0 386.7L280.2 387.1L280.3 385.5L280.4 389.4L280.5 387.8L280.6 388.6L280.7 386.8L280.8 385.0L280.9 388.0L281.1 387.7L281.2 385.1L281.3 389.6L281.4 383.8L281.5 390.9L281.6 387.5L281.7 384.5L281.9 387.3L282.0 383.7L282.1 389.6L282.2 389.0L282.3 386.3L282.4 385.6L282.5 389.8L282.7 393.1L282.8 387.9L282.9 389.2L283.0 390.4L283.1 385.2L283.2 387.3L283.3 390.4L283.5 384.6L283.6 384.4L283.7 390.7L283.8 384.3L283.9 388.9L284.0 389.9L284.1 386.6L284.3 388.2L284.4 383.8L284.5 385.4L284.6 389.0L284.7 390.7L284.8 388.2L284.9 387.9L285.1 385.5L285.2 383.6L285.3 385.9L285.4 388.0L285.5 385.4L285.6 390.8L285.7 388.3L285.9 385.6L286.0 384.6L286.1 384.1L286.2 383.7L286.3 390.9L286.4 390.5L286.5 384.0L286.6 386.0L286.8 389.1L286.9 388.9L287.0 389.3L287.1 389.1L287.2 386.2L287.3 388.2L287.4 389.9L287.6 384.9L287.7 390.6L287.8 388.5L287.9 386.1L288.0 388.2L288.1 384.6L288.2 387.0L288.4 387.7L288.5 389.5L288.6 385.0L288.7 389.5L288.8 385.5L288.9 387.4L289.0 390.5L289.2 385.8L289.3 386.2L289.4 390.3L289.5 387.0L289.6 388.1L289.7 387.0L289.8 385.7L290.0 386.0L290.1 388.7L290.2 387.5L290.3 389.7L290.4 390.2L290.5 385.7L290.6 387.1L290.8 383.7L290.9 390.4L291.0 388.9L291.1 383.8L291.2 386.7L291.3 387.1L291.4 384.8L291.6 387.0L291.7 390.9L291.8 387.4L291.9 388.8L292.0 390.7L292.1 389.8L292.2 388.6L292.4 386.5L292.5 384.6L292.6 390.1L292.7 390.9L292.8 388.6L292.9 390.2L293.0 384.8L293.1 386.6L293.3 390.9L293.4 383.7L293.5 384.0L293.6 385.3L293.7 386.7L293.8 384.9L293.9 385.2L294.1 387.5L294.2 384.5L294.3 389.8L294.4 383.9L294.5 384.0L294.6 384.7L294.7 386.5L294.9 387.9L295.0 383.9L295.1 390.2L295.2 387.2L295.3 386.6L295.4 386.2L295.5 392.6L295.7 388.2L295.8 387.4L295.9 385.4L296.0 386.4L296.1 389.1L296.2 387.8L296.3 386.7L296.5 386.3L296.6 388.0L296.7 388.9L296.8 383.9L296.9 389.2L297.0 390.3L297.1 383.2L297.3 391.7L297.4 386.7L297.5 385.8L297.6 390.9L297.7 386.8L297.8 387.5L297.9 385.9L298.1 387.1L298.2 387.2L298.3 388.6L298.4 391.4L298.5 386.1L298.6 390.4L298.7 390.8L298.8 386.7L299.0 389.6L299.1 388.3L299.2 389.2L299.3 386.1L299.4 388.2L299.5 387.2L299.6 390.7L299.8 387.7L299.9 384.3L300.0 390.6L300.1 383.8L300.2 387.5L300.3 384.0L300.4 390.2L300.6 386.6L300.7 384.5L300.8 383.9L300.9 386.0L301.0 386.6L301.1 384.9L301.2 385.0L301.4 384.6L301.5 387.1L301.6 389.5L301.7 383.8L301.8 385.7L301.9 386.2L302.0 387.4L302.2 389.9L302.3 388.3L302.4 389.7L302.5 388.6L302.6 387.4L302.7 384.3L302.8 385.7L303.0 386.0L303.1 384.2L303.2 390.7L303.3 389.9L303.4 386.4L303.5 389.3L303.6 388.2L303.8 389.5L303.9 386.5L304.0 388.2L304.1 388.7L304.2 384.8L304.3 385.6L304.4 384.0L304.5 389.2L304.7 385.4L304.8 387.5L304.9 389.9L305.0 384.5L305.1 385.9L305.2 384.3L305.3 384.4L305.5 390.1L305.6 390.5L305.7 386.4L305.8 384.8L305.9 385.7L306.0 390.8L306.1 389.7L306.3 388.2L306.4 390.1L306.5 390.1L306.6 389.8L306.7 385.9L306.8 385.4L306.9 387.9L307.1 387.3L307.2 390.3L307.3 386.2L307.4 389.3L307.5 386.1L307.6 389.4L307.7 390.4L307.9 386.9L308.0 386.1L308.1 389.4L308.2 386.4L308.3 384.8L308.4 389.0L308.5 386.0L308.7 389.7L308.8 388.7L308.9 387.7L309.0 386.8L309.1 390.6L309.2 386.6L309.3 388.5L309.4 386.4L309.6 389.3L309.7 387.7L309.8 388.1L309.9 383.9L310.0 383.7L310.1 386.9L310.2 387.6L310.4 389.5L310.5 385.7L310.6 387.0L310.7 390.3L310.8 388.3L310.9 384.4L311.0 389.6L311.2 388.4L311.3 389.3L311.4 390.3L311.5 388.8L311.6 389.6L311.7 386.3L311.8 385.0L312.0 385.2L312.1 390.6L312.2 384.7L312.3 384.5L312.4 384.7L312.5 388.8L312.6 386.4L312.8 385.1L312.9 390.2L313.0 384.7L313.1 387.8L313.2 390.6L313.3 385.8L313.4 384.9L313.6 384.8L313.7 387.5L313.8 387.9L313.9 389.8L314.0 386.2L314.1 390.2L314.2 390.5L314.4 388.7L314.5 388.9L314.6 385.1L314.7 386.7L314.8 390.9L314.9 389.3L315.0 386.8L315.2 389.7L315.3 385.6L315.4 386.0L315.5 387.4L315.6 384.0L315.7 388.0L315.8 388.3L315.9 387.3L316.1 390.4L316.2 390.2L316.3 390.1L316.4 384.2L316.5 387.5L316.6 391.7L316.7 386.5L316.9 384.8L317.0 390.7L317.1 384.7L317.2 387.1L317.3 385.6L317.4 389.1L317.5 390.6L317.7 386.5L317.8 390.2L317.9 385.7L318.0 384.5L318.1 389.1L318.2 387.5L318.3 386.8L318.5 388.0L318.6 387.1L318.7 387.0L318.8 389.6L318.9 388.8L319.0 390.9L319.1 387.1L319.3 385.4L319.4 389.3L319.5 386.1L319.6 390.9L319.7 388.5L319.8 389.3L319.9 384.6L320.1 390.0L320.2 387.8L320.3 388.9L320.4 385.7L320.5 386.3L320.6 390.7L320.7 386.8L320.9 390.3L321.0 385.5L321.1 390.6L321.2 388.4L321.3 385.9L321.4 389.3L321.5 385.0L321.6 389.2L321.8 390.8L321.9 389.3L322.0 386.9L322.1 387.7L322.2 388.6L322.3 384.3L322.4 385.9L322.6 390.5L322.7 384.6L322.8 385.6L322.9 386.7L323.0 390.0L323.1 386.5L323.2 387.4L323.4 384.4L323.5 387.0L323.6 389.4L323.7 388.8L323.8 390.0L323.9 387.3L324.0 389.8L324.2 388.4L324.3 389.8L324.4 387.6L324.5 389.3L324.6 389.8L324.7 385.7L324.8 385.5L325.0 385.2L325.1 390.7L325.2 384.7L325.3 388.8L325.4 387.7L325.5 385.8L325.6 390.0L325.8 389.7L325.9 384.6L326.0 384.5L326.1 389.8L326.2 388.8L326.3 390.3L326.4 386.7L326.6 391.4L326.7 391.7L326.8 390.1L326.9 384.8L327.0 388.6L327.1 389.5L327.2 391.1L327.3 385.0L327.5 390.6L327.6 386.3L327.7 389.5L327.8 387.7L327.9 385.2L328.0 394.6L328.1 391.4L328.3 390.2L328.4 392.3L328.5 388.0L328.6 385.9L328.7 390.0L328.8 389.4L328.9 390.8L329.1 386.0L329.2 385.1L329.3 389.5L329.4 387.2L329.5 391.9L329.6 387.2L329.7 391.4L329.9 384.8L330.0 388.1L330.1 390.6L330.2 390.1L330.3 389.3L330.4 384.9L330.5 385.2L330.7 385.8L330.8 391.7L330.9 389.7L331.0 385.9L331.1 390.4L331.2 389.6L331.3 385.8L331.5 392.2L331.6 389.4L331.7 388.3L331.8 386.7L331.9 385.1L332.0 386.2L332.1 388.4L332.2 391.7L332.4 386.1L332.5 392.0L332.6 385.3L332.7 391.5L332.8 385.0L332.9 388.5L333.0 389.8L333.2 389.7L333.3 386.4L333.4 392.1L333.5 387.6L333.6 389.3L333.7 385.3L333.8 387.3L334.0 387.9L334.1 390.0L334.2 390.6L334.3 390.7L334.4 388.5L334.5 392.3L334.6 386.2L334.8 389.7L334.9 390.9L335.0 385.3L335.1 391.0L335.2 386.3L335.3 386.4L335.4 386.7L335.6 392.2L335.7 390.3L335.8 389.3L335.9 391.8L336.0 388.8L336.1 388.7L336.2 386.1L336.4 392.3L336.5 384.6L336.6 390.3L336.7 390.6L336.8 389.9L336.9 389.9L337.0 388.9L337.2 388.4L337.3 391.4L337.4 392.3L337.5 388.3L337.6 387.9L337.7 387.0L337.8 392.2L337.9 385.6L338.1 392.7L338.2 387.4L338.3 387.7L338.4 386.3L338.5 390.8L338.6 390.7L338.7 387.0L338.9 385.4L339.0 390.9L339.1 389.8L339.2 385.7L339.3 387.9L339.4 390.6L339.5 385.8L339.7 390.7L339.8 385.8L339.9 388.0L340.0 389.0L340.1 392.0L340.2 389.9L340.3 394.6L340.5 388.4L340.6 388.1L340.7 392.6L340.8 386.6L340.9 387.1L341.0 387.1L341.1 390.1L341.3 392.1L341.4 387.5L341.5 391.0L341.6 390.0L341.7 389.9L341.8 388.7L341.9 388.3L342.1 386.2L342.2 387.3L342.3 394.4L342.4 392.8L342.5 389.5L342.6 392.3L342.7 386.3L342.9 387.4L343.0 391.6L343.1 388.6L343.2 392.3L343.3 391.4L343.4 389.5L343.5 386.8L343.7 390.6L343.8 388.6L343.9 390.2L344.0 387.0L344.1 390.9L344.2 388.5L344.3 393.2L344.4 388.7L344.6 391.0L344.7 389.2L344.8 387.3L344.9 389.4L345.0 391.2L345.1 390.8L345.2 393.0L345.4 392.8L345.5 390.1L345.6 391.6L345.7 387.4L345.8 391.2L345.9 391.1L346.0 393.1L346.2 393.0L346.3 389.9L346.4 388.7L346.5 393.8L346.6 390.9L346.7 388.0L346.8 393.6L347.0 391.8L347.1 388.5L347.2 392.4L347.3 391.3L347.4 388.5L347.5 390.8L347.6 390.6L347.8 392.6L347.9 389.0L348.0 392.7L348.1 393.6L348.2 392.1L348.3 388.4L348.4 390.5L348.6 390.9L348.7 387.6L348.8 391.1L348.9 388.5L349.0 389.2L349.1 387.6L349.2 393.3L349.4 388.3L349.5 389.3L349.6 390.3L349.7 391.3L349.8 388.7L349.9 389.2L350.0 392.2L350.1 392.0L350.3 389.4L350.4 393.3L350.5 391.1L350.6 390.9L350.7 392.3L350.8 388.1L350.9 391.7L351.1 391.4L351.2 388.8L351.3 393.4L351.4 389.6L351.5 390.8L351.6 393.8L351.7 388.9L351.9 388.1L352.0 394.1L352.1 395.2L352.2 390.2L352.3 390.7L352.4 390.3L352.5 391.6L352.7 391.2L352.8 390.0L352.9 388.4L353.0 391.2L353.1 388.9L353.2 393.1L353.3 391.8L353.5 394.4L353.6 390.1L353.7 393.2L353.8 393.5L353.9 390.5L354.0 391.6L354.1 391.0L354.3 390.4L354.4 393.9L354.5 392.3L354.6 392.4L354.7 389.1L354.8 394.9L354.9 395.5L355.1 393.8L355.2 392.3L355.3 389.4L355.4 394.7L355.5 394.2L355.6 392.6L355.7 389.3L355.8 391.1L356.0 393.0L356.1 389.9L356.2 394.7L356.3 393.5L356.4 392.8L356.5 394.5L356.6 390.7L356.8 391.1L356.9 392.0L357.0 395.7L357.1 389.6L357.2 393.0L357.3 394.0L357.4 390.0L357.6 390.2L357.7 391.5L357.8 396.7L357.9 394.9L358.0 394.9L358.1 396.7L358.2 396.6L358.4 389.5L358.5 393.6L358.6 392.2L358.7 390.7L358.8 397.0L358.9 392.5L359.0 392.2L359.2 394.5L359.3 390.2L359.4 390.4L359.5 396.3L359.6 397.3L359.7 390.4L359.8 389.9L360.0 393.4L360.1 390.2L360.2 396.1L360.3 395.3L360.4 395.7L360.5 394.8L360.6 391.0L360.8 395.4L360.9 393.5L361.0 391.4L361.1 392.2L361.2 394.9L361.3 395.4L361.4 397.2L361.5 393.3L361.7 395.0L361.8 396.3L361.9 392.6L362.0 392.9L362.1 391.5L362.2 392.2L362.3 391.1L362.5 393.4L362.6 394.3L362.7 394.8L362.8 394.9L362.9 394.3L363.0 392.0L363.1 391.7L363.3 397.6L363.4 392.7L363.5 392.5L363.6 391.9L363.7 392.9L363.8 398.3L363.9 398.0L364.1 396.3L364.2 394.6L364.3 397.4L364.4 395.4L364.5 395.3L364.6 394.0L364.7 394.5L364.9 392.7L365.0 393.7L365.1 396.9L365.2 396.3L365.3 398.0L365.4 398.2L365.5 398.6L365.7 397.9L365.8 395.6L365.9 395.8L366.0 397.0L366.1 398.5L366.2 393.1L366.3 392.4L366.4 392.9L366.6 394.7L366.7 393.0L366.8 392.4L366.9 398.5L367.0 396.2L367.1 396.1L367.2 395.3L367.4 392.0L367.5 397.4L367.6 395.6L367.7 393.9L367.8 397.1L367.9 394.9L368.0 392.5L368.2 398.9L368.3 393.8L368.4 398.1L368.5 397.9L368.6 399.3L368.7 397.9L368.8 393.9L369.0 397.7L369.1 395.0L369.2 394.7L369.3 393.9L369.4 399.1L369.5 400.5L369.6 399.3L369.8 395.5L369.9 396.7L370.0 397.8L370.1 400.2L370.2 395.3L370.3 395.7L370.4 396.6L370.6 397.9L370.7 395.1L370.8 403.4L370.9 393.5L371.0 399.3L371.1 401.3L371.2 400.0L371.4 399.3L371.5 395.0L371.6 394.4L371.7 396.3L371.8 399.4L371.9 398.7L372.0 395.5L372.2 395.9L372.3 398.3L372.4 400.8L372.5 396.2L372.6 398.5L372.7 400.4L372.8 394.7L372.9 399.1L373.1 399.3L373.2 400.6L373.3 396.0L373.4 401.6L373.5 396.5L373.6 399.2L373.7 402.8L373.9 402.0L374.0 401.6L374.1 398.7L374.2 399.2L374.3 402.4L374.4 395.4L374.5 398.7L374.7 399.8L374.8 399.1L374.9 396.3L375.0 397.0L375.1 402.4L375.2 401.9L375.3 395.6L375.5 400.6L375.6 395.8L375.7 403.1L375.8 400.3L375.9 403.3L376.0 397.4L376.1 400.4L376.3 400.8L376.4 397.1L376.5 397.3L376.6 401.3L376.7 404.0L376.8 401.9L376.9 402.9L377.1 402.1L377.2 400.6L377.3 403.8L377.4 403.0L377.5 400.8L377.6 402.3L377.7 401.4L377.9 403.5L378.0 402.2L378.1 401.7L378.2 400.2L378.3 399.5L378.4 402.6L378.5 403.3L378.6 397.6L378.8 397.5L378.9 398.1L379.0 400.8L379.1 402.7L379.2 400.6L379.3 398.5L379.4 403.2L379.6 402.3L379.7 404.6L379.8 398.8L379.9 402.1L380.0 400.0L380.1 399.8L380.2 401.1L380.4 404.9L380.5 399.1L380.6 402.3L380.7 401.1L380.8 401.8L380.9 401.6L381.0 404.3L381.2 403.5L381.3 401.8L381.4 405.6L381.5 401.6L381.6 403.7L381.7 405.2L381.8 406.1L382.0 399.0L382.1 401.4L382.2 402.5L382.3 404.3L382.4 402.8L382.5 407.9L382.6 401.8L382.8 401.8L382.9 405.7L383.0 404.6L383.1 401.3L383.2 402.7L383.3 405.2L383.4 401.3L383.6 405.0L383.7 402.9L383.8 405.5L383.9 406.4L384.0 402.5L384.1 405.6L384.2 404.0L384.3 404.6L384.5 402.9L384.6 408.3L384.7 405.3L384.8 403.1L384.9 407.0L385.0 408.1L385.1 405.3L385.3 409.8L385.4 404.9L385.5 404.1L385.6 403.4L385.7 406.3L385.8 407.1L385.9 408.5L386.1 411.1L386.2 408.2L386.3 402.3L386.4 411.1L386.5 406.6L386.6 405.7L386.7 406.5L386.9 411.2L387.0 406.3L387.1 413.5L387.2 411.5L387.3 409.5L387.4 408.1L387.5 411.4L387.7 413.3L387.8 410.4L387.9 411.1L388.0 413.0L388.1 408.4L388.2 409.5L388.3 409.8L388.5 410.5L388.6 412.8L388.7 410.6L388.8 415.1L388.9 408.9L389.0 409.1L389.1 410.5L389.2 412.3L389.4 410.8L389.5 407.4L389.6 409.7L389.7 410.2L389.8 409.7L389.9 410.8L390.0 408.2L390.2 412.5L390.3 412.2L390.4 412.0L390.5 410.2L390.6 415.8L390.7 413.9L390.8 415.9L391.0 416.1L391.1 413.8L391.2 413.1L391.3 413.1L391.4 416.7L391.5 416.3L391.6 416.0L391.8 413.8L391.9 414.9L392.0 415.8L392.1 414.6L392.2 416.8L392.3 415.8L392.4 412.2L392.6 417.8L392.7 416.6L392.8 414.6L392.9 416.3L393.0 419.5L393.1 414.8L393.2 414.8L393.4 416.1L393.5 414.0L393.6 417.8L393.7 415.0L393.8 416.2L393.9 417.7L394.0 418.0L394.2 416.0L394.3 417.7L394.4 422.2L394.5 419.0L394.6 419.5L394.7 421.5L394.8 422.9L394.9 416.9L395.1 420.5L395.2 418.5L395.3 421.0L395.4 422.0L395.5 423.3L395.6 424.6L395.7 423.2L395.9 424.2L396.0 418.8L396.1 423.0L396.2 421.8L396.3 425.2L396.4 421.7L396.5 420.0L396.7 424.8L396.8 426.7L396.9 424.2L397.0 423.2L397.1 427.8L397.2 428.1L397.3 421.7L397.5 427.0L397.6 422.6L397.7 429.4L397.8 429.6L397.9 424.3L398.0 426.6L398.1 428.8L398.3 426.3L398.4 425.6L398.5 425.0L398.6 429.6L398.7 429.6L398.8 425.7L398.9 428.2L399.1 429.8L399.2 434.7L399.3 432.2L399.4 431.1L399.5 435.2L399.6 435.9L399.7 432.7L399.9 434.5L400.0 439.0L400.1 436.4L400.2 438.1L400.3 440.6L400.4 436.6L400.5 442.9L400.7 436.7L400.8 441.1L400.9 442.0L401.0 443.5L401.1 442.8L401.2 442.3L401.3 442.2L401.4 447.6L401.6 445.1L401.7 443.4L401.8 448.0L401.9 451.0L402.0 450.6L402.1 446.1L402.2 453.3L402.4 453.2L402.5 448.2L402.6 454.1L402.7 452.9L402.8 449.8L402.9 452.8L403.0 454.3L403.2 453.9L403.3 456.1L403.4 454.7L403.5 458.4L403.6 454.9L403.7 458.8L403.8 458.3L404.0 462.1L404.1 463.8L404.2 464.1L404.3 459.7L404.4 465.9L404.5 467.1L404.6 459.4L404.8 462.2L404.9 468.9L405.0 468.1L405.1 470.9L405.2 465.9L405.3 468.3L405.4 469.5L405.6 473.2L405.7 468.6L405.8 473.3L405.9 472.7L406.0 471.6L406.1 473.6L406.2 473.6L406.4 474.3L406.5 470.0L406.6 475.1L406.7 476.3L406.8 469.5L406.9 473.0L407.0 470.3L407.1 469.4L407.3 473.7L407.4 476.6L407.5 473.0L407.6 470.7L407.7 471.6L407.8 471.0L407.9 472.2L408.1 478.7L408.2 475.3L408.3 473.2L408.4 472.3L408.5 475.8L408.6 469.9L408.7 469.7L408.9 473.8L409.0 472.0L409.1 469.8L409.2 473.3L409.3 475.1L409.4 470.3L409.5 470.4L409.7 472.3L409.8 474.6L409.9 475.3L410.0 471.4L410.1 474.9L410.2 475.2L410.3 472.4L410.5 474.8L410.6 469.8L410.7 476.3L410.8 473.4L410.9 475.2L411.0 475.7L411.1 473.3L411.3 474.0L411.4 476.1L411.5 475.7L411.6 472.7L411.7 473.7L411.8 474.0L411.9 474.4L412.1 476.0L412.2 470.4L412.3 477.7L412.4 474.2L412.5 474.3L412.6 472.8L412.7 476.4L412.8 470.0L413.0 476.0L413.1 476.2L413.2 472.0L413.3 468.2L413.4 471.4L413.5 474.7L413.6 473.2L413.8 475.8L413.9 469.6L414.0 478.3L414.1 473.8L414.2 471.2L414.3 471.3L414.4 471.6L414.6 476.4L414.7 474.6L414.8 476.8L414.9 471.7L415.0 476.6L415.1 474.7L415.2 475.4L415.4 471.9L415.5 473.2L415.6 474.4L415.7 472.7L415.8 471.1L415.9 474.9L416.0 475.1L416.2 475.8L416.3 470.2L416.4 471.3L416.5 471.5L416.6 473.7L416.7 471.6L416.8 473.2L417.0 469.7L417.1 476.6L417.2 472.1L417.3 476.4L417.4 471.4L417.5 476.4L417.6 470.3L417.8 476.9L417.9 476.3L418.0 472.7L418.1 470.9L418.2 475.8L418.3 469.9L418.4 473.8L418.5 470.3L418.7 472.5L418.8 472.9L418.9 475.4L419.0 472.0L419.1 470.5L419.2 475.0L419.3 476.0L419.5 475.8L419.6 473.4L419.7 475.0L419.8 474.7L419.9 475.1L420.0 470.5L420.1 472.4L420.3 471.7L420.4 471.4L420.5 472.1L420.6 476.1" stroke="#3cff14" stroke-width="1.25" fill="none" stroke-linejoin="round"/><path d="M414.6 426 V472" stroke="#2ab414" stroke-width="0.9"/></svg>
<span class="t" style="top:84px;font-size:10.1px;left:55.50px;color:#ffffff;">Rng 630.9573 mV</span>
<span class="t" style="top:96px;font-size:10.1px;left:37.96px;color:#ffffff;">2.5</span>
<span class="t" style="top:150px;font-size:10.1px;left:37.97px;color:#ffffff;">I-Q</span>
<span class="t" style="top:193px;font-size:10.1px;left:35.15px;color:#ffffff;">500</span>
<span class="t" style="top:205px;font-size:10.1px;left:43.59px;color:#ffffff;">m</span>
<span class="t" style="top:217px;font-size:10.1px;left:36.28px;color:#ffffff;">/div</span>
<span class="t" style="top:260px;font-size:10.1px;left:34.60px;color:#ffffff;">-2.5</span>
<span class="t" style="top:284px;font-size:10.1px;left:55.50px;color:#ffffff;">-4.84452736</span>
<span class="t" style="top:284px;font-size:10.1px;left:355.52px;color:#ffffff;">4.844527363</span>
<span class="t" style="top:95px;font-size:15.35px;left:63.50px;color:#4a4a4a;">Beta Code</span>
<span class="t" style="top:113px;font-size:15.35px;left:63.50px;color:#4a4a4a;">Not For Sale</span>
<span class="t" style="top:343px;font-size:10.1px;left:55.50px;color:#ffffff;">Rng 6 dBm</span>
<span class="t" style="top:343px;font-size:10.1px;left:219.50px;color:#36dc14;">RMS:20</span>
<span class="t" style="top:356px;font-size:10.1px;left:37.40px;color:#ffffff;">-20</span>
<span class="t" style="top:368px;font-size:10.1px;left:31.23px;color:#ffffff;">dBm</span>
<span class="t" style="top:410px;font-size:10.1px;left:15.50px;color:#ffffff;">LogMag</span>
<span class="t" style="top:453px;font-size:10.1px;left:40.77px;color:#ffffff;">10</span>
<span class="t" style="top:465px;font-size:10.1px;left:39.65px;color:#ffffff;">dB</span>
<span class="t" style="top:478px;font-size:10.1px;left:36.28px;color:#ffffff;">/div</span>
<span class="t" style="top:520px;font-size:10.1px;left:31.78px;color:#ffffff;">-120</span>
<span class="t" style="top:532px;font-size:10.1px;left:31.23px;color:#ffffff;">dBm</span>
<span class="t" style="top:545px;font-size:10.1px;left:55.50px;color:#ffffff;">Center 10 GHz</span>
<span class="t" style="top:557px;font-size:10.1px;left:55.50px;color:#ffffff;">Res BW 91.5588 kHz</span>
<span class="t" style="top:545px;font-size:10.1px;left:353.19px;color:#ffffff;">Span 600 MHz</span>
<span class="t" style="top:557px;font-size:10.1px;left:310.32px;color:#ffffff;">TimeLen 41.71484 uSec</span>
<span class="t" style="top:355px;font-size:15.35px;left:64.00px;color:#4a4a4a;">Beta Code</span>
<span class="t" style="top:373px;font-size:15.35px;left:64.00px;color:#4a4a4a;">Not For Sale</span>
<span class="t" style="top:105px;font-size:10.15px;left:442.50px;color:#00c83c;">Frame Index</span>
<span class="t" style="top:105px;font-size:10.15px;left:518.30px;color:#00c83c;">=</span>
<span class="t" style="top:105px;font-size:10.15px;left:529.70px;color:#00c83c;">0</span>
<span class="t" style="top:117px;font-size:10.15px;left:442.50px;color:#00c83c;">PLSCODE</span>
<span class="t" style="top:117px;font-size:10.15px;left:518.30px;color:#00c83c;">=</span>
<span class="t" style="top:117px;font-size:10.15px;left:529.70px;color:#00c83c;">10011101,</span>
<span class="t" style="top:117px;font-size:10.15px;left:592.00px;color:#00c83c;">16APSK3/5,</span>
<span class="t" style="top:117px;font-size:10.15px;left:659.50px;color:#00c83c;">Type</span>
<span class="t" style="top:117px;font-size:10.15px;left:687.40px;color:#00c83c;">Normal,</span>
<span class="t" style="top:117px;font-size:10.15px;left:732.00px;color:#00c83c;">Pilot</span>
<span class="t" style="top:129px;font-size:10.15px;left:442.50px;color:#00c83c;">Payload</span>
<span class="t" style="top:129px;font-size:10.15px;left:518.30px;color:#00c83c;">=</span>
<span class="t" style="top:129px;font-size:10.15px;left:529.70px;color:#00c83c;">LDPCParity</span>
<span class="t" style="top:129px;font-size:10.15px;left:596.80px;color:#00c83c;">Check</span>
<span class="t" style="top:129px;font-size:10.15px;left:631.00px;color:#00c83c;">Pass,</span>
<span class="t" style="top:129px;font-size:10.15px;left:664.80px;color:#00c83c;">LDPCIterations</span>
<span class="t" style="top:129px;font-size:10.15px;left:754.80px;color:#00c83c;">1</span>
<span class="t" style="top:141px;font-size:10.15px;left:442.50px;color:#00c83c;">Payload Header</span>
<span class="t" style="top:141px;font-size:10.15px;left:518.30px;color:#00c83c;">=</span>
<span class="t" style="top:141px;font-size:10.15px;left:529.70px;color:#00c83c;">0xF00005E096D047055028,</span>
<span class="t" style="top:141px;font-size:10.15px;left:664.40px;color:#00c83c;">CRC</span>
<span class="t" style="top:141px;font-size:10.15px;left:693.20px;color:#00c83c;">Pass</span>
<div class="b" style="left:434.20px;top:295.50px;width:332.30px;height:10.30px;background:#f0f0f0;"></div>
<div class="b" style="left:443.00px;top:297.00px;width:10.00px;height:8.20px;background:#c8c8c8;"></div>
<svg width="1200" height="596"><path d="M440 298.4 l-2.4 2.4 l2.4 2.4 M759.6 298.4 l2.4 2.4 l-2.4 2.4" fill="none" stroke="#5a5a5a" stroke-width="1"/></svg>
<span class="t" style="top:84px;font-size:10.18px;left:981.50px;color:#3c88f8;">RMS:20</span>
<span class="t" style="top:105px;font-size:10.18px;left:781.70px;color:#3c88f8;">EVM</span>
<span class="t" style="top:105px;font-size:10.18px;left:885.30px;color:#3c88f8;">=</span>
<span class="t" style="top:105px;font-size:10.18px;transform:scaleX(0.9872);left:896.80px;color:#3c88f8;">-38.612</span>
<span class="t" style="top:105px;font-size:10.18px;left:963.50px;color:#3c88f8;">dB</span>
<span class="t" style="top:117px;font-size:10.18px;left:781.70px;color:#3c88f8;">Mag Err</span>
<span class="t" style="top:117px;font-size:10.18px;left:885.30px;color:#3c88f8;">=</span>
<span class="t" style="top:117px;font-size:10.18px;transform:scaleX(0.9872);left:896.80px;color:#3c88f8;">799.99</span>
<span class="t" style="top:117px;font-size:10.18px;left:946.50px;color:#3c88f8;">m%rms</span>
<span class="t" style="top:129px;font-size:10.18px;left:781.70px;color:#3c88f8;">Phase Err</span>
<span class="t" style="top:129px;font-size:10.18px;left:885.30px;color:#3c88f8;">=</span>
<span class="t" style="top:129px;font-size:10.18px;transform:scaleX(0.9872);left:896.80px;color:#3c88f8;">866.29</span>
<span class="t" style="top:129px;font-size:10.18px;left:952.40px;color:#3c88f8;">mdeg</span>
<span class="t" style="top:141px;font-size:10.18px;left:781.70px;color:#3c88f8;">Freq Err</span>
<span class="t" style="top:141px;font-size:10.18px;left:885.30px;color:#3c88f8;">=</span>
<span class="t" style="top:141px;font-size:10.18px;transform:scaleX(0.9872);left:896.80px;color:#3c88f8;">-417.72</span>
<span class="t" style="top:141px;font-size:10.18px;left:958.00px;color:#3c88f8;">mHz</span>
<span class="t" style="top:153px;font-size:10.18px;left:781.70px;color:#3c88f8;">Sync Correlation</span>
<span class="t" style="top:153px;font-size:10.18px;left:885.30px;color:#3c88f8;">=</span>
<span class="t" style="top:153px;font-size:10.18px;transform:scaleX(0.9872);left:896.80px;color:#3c88f8;">0.99993</span>
<span class="t" style="top:166px;font-size:10.18px;left:781.70px;color:#3c88f8;">Time Offset</span>
<span class="t" style="top:166px;font-size:10.18px;left:885.30px;color:#3c88f8;">=</span>
<span class="t" style="top:166px;font-size:10.18px;transform:scaleX(0.9872);left:896.80px;color:#3c88f8;">25.651</span>
<span class="t" style="top:166px;font-size:10.18px;left:952.40px;color:#3c88f8;">usec</span>
<span class="t" style="top:178px;font-size:10.18px;left:781.70px;color:#3c88f8;">System Clock Error</span>
<span class="t" style="top:178px;font-size:10.18px;left:885.30px;color:#3c88f8;">=</span>
<span class="t" style="top:178px;font-size:10.18px;transform:scaleX(0.9872);left:896.80px;color:#3c88f8;">-21.398</span>
<span class="t" style="top:178px;font-size:10.18px;left:952.40px;color:#3c88f8;">mppm</span>
<span class="t" style="top:190px;font-size:10.18px;left:781.70px;color:#3c88f8;">Channel Power</span>
<span class="t" style="top:190px;font-size:10.18px;left:885.30px;color:#3c88f8;">=</span>
<span class="t" style="top:190px;font-size:10.18px;transform:scaleX(0.9872);left:896.80px;color:#3c88f8;">-1.285</span>
<span class="t" style="top:190px;font-size:10.18px;left:958.00px;color:#3c88f8;">dBm</span>
<span class="t" style="top:202px;font-size:10.18px;left:781.70px;color:#3c88f8;">Active Channel Power</span>
<span class="t" style="top:202px;font-size:10.18px;left:885.30px;color:#3c88f8;">=</span>
<span class="t" style="top:202px;font-size:10.18px;transform:scaleX(0.9872);left:896.80px;color:#3c88f8;">-1.286</span>
<span class="t" style="top:202px;font-size:10.18px;left:958.00px;color:#3c88f8;">dBm</span>
<span class="t" style="top:214px;font-size:10.18px;left:781.70px;color:#3c88f8;">Result Length</span>
<span class="t" style="top:214px;font-size:10.18px;left:885.30px;color:#3c88f8;">=</span>
<span class="t" style="top:214px;font-size:10.18px;transform:scaleX(0.9872);left:896.80px;color:#3c88f8;">16.686</span>
<span class="t" style="top:214px;font-size:10.18px;left:952.40px;color:#3c88f8;">ksym</span>
<span class="t" style="top:226px;font-size:10.18px;left:781.70px;color:#3c88f8;">IQ Offset</span>
<span class="t" style="top:226px;font-size:10.18px;left:885.30px;color:#3c88f8;">=</span>
<span class="t" style="top:226px;font-size:10.18px;transform:scaleX(0.9872);left:896.80px;color:#3c88f8;">-56.031</span>
<span class="t" style="top:226px;font-size:10.18px;left:963.50px;color:#3c88f8;">dB</span>
<span class="t" style="top:239px;font-size:10.18px;left:781.70px;color:#3c88f8;">IQ Gain Imbalance</span>
<span class="t" style="top:239px;font-size:10.18px;left:885.30px;color:#3c88f8;">=</span>
<span class="t" style="top:239px;font-size:10.18px;left:896.80px;color:#3c88f8;">0</span>
<span class="t" style="top:239px;font-size:10.18px;left:963.50px;color:#3c88f8;">dB</span>
<span class="t" style="top:251px;font-size:10.18px;left:781.70px;color:#3c88f8;">IQ QuadSkew</span>
<span class="t" style="top:251px;font-size:10.18px;left:885.30px;color:#3c88f8;">=</span>
<span class="t" style="top:251px;font-size:10.18px;transform:scaleX(0.9872);left:896.80px;color:#3c88f8;">-4.9358</span>
<span class="t" style="top:251px;font-size:10.18px;left:952.40px;color:#3c88f8;">mdeg</span>
<span class="t" style="top:105px;font-size:10.18px;left:1003.50px;color:#3c88f8;">-29.068</span>
<span class="t" style="top:105px;font-size:10.18px;left:1059.50px;color:#3c88f8;">dB</span>
<span class="t" style="top:105px;font-size:10.18px;left:1081.60px;color:#3c88f8;">pk</span>
<span class="t" style="top:105px;font-size:10.18px;left:1098.80px;color:#3c88f8;">at</span>
<span class="t" style="top:105px;font-size:10.18px;left:1115.90px;color:#3c88f8;">sym</span>
<span class="t" style="top:105px;font-size:10.18px;left:1138.40px;color:#3c88f8;">9463</span>
<span class="t" style="top:117px;font-size:10.18px;left:1003.50px;color:#3c88f8;">-3.2703</span>
<span class="t" style="top:117px;font-size:10.18px;left:1065.50px;color:#3c88f8;">%</span>
<span class="t" style="top:117px;font-size:10.18px;left:1081.60px;color:#3c88f8;">pk</span>
<span class="t" style="top:117px;font-size:10.18px;left:1098.80px;color:#3c88f8;">at</span>
<span class="t" style="top:117px;font-size:10.18px;left:1115.90px;color:#3c88f8;">sym</span>
<span class="t" style="top:117px;font-size:10.18px;left:1138.40px;color:#3c88f8;">10036</span>
<span class="t" style="top:129px;font-size:10.18px;left:1003.50px;color:#3c88f8;">-5.8343</span>
<span class="t" style="top:129px;font-size:10.18px;left:1053.90px;color:#3c88f8;">deg</span>
<span class="t" style="top:129px;font-size:10.18px;left:1081.60px;color:#3c88f8;">pk</span>
<span class="t" style="top:129px;font-size:10.18px;left:1098.80px;color:#3c88f8;">at</span>
<span class="t" style="top:129px;font-size:10.18px;left:1115.90px;color:#3c88f8;">sym</span>
<span class="t" style="top:129px;font-size:10.18px;left:1138.40px;color:#3c88f8;">2524</span>
<div class="b" style="left:779.00px;top:263.60px;width:400.00px;height:1.00px;background:#2d62ba;"></div>
<span class="t" style="top:269px;font-size:10.18px;left:781.70px;color:#3c88f8;">BER</span>
<span class="t" style="top:269px;font-size:10.18px;left:885.30px;color:#3c88f8;">=</span>
<span class="t" style="top:269px;font-size:10.18px;transform:scaleX(0.9872);left:896.80px;color:#3c88f8;">0.0000</span>
<span class="t" style="top:282px;font-size:10.18px;left:781.70px;color:#3c88f8;">Bit Errors</span>
<span class="t" style="top:282px;font-size:10.18px;left:885.30px;color:#3c88f8;">=</span>
<span class="t" style="top:282px;font-size:10.18px;transform:scaleX(0.9872);left:896.80px;color:#3c88f8;">0.0000</span>
<span class="t" style="top:282px;font-size:10.18px;left:958.00px;color:#3c88f8;">bit</span>
<span class="t" style="top:294px;font-size:10.18px;left:781.70px;color:#3c88f8;">Bit Count</span>
<span class="t" style="top:294px;font-size:10.18px;left:885.30px;color:#3c88f8;">=</span>
<span class="t" style="top:294px;font-size:10.18px;transform:scaleX(0.9872);left:896.80px;color:#3c88f8;">772.16</span>
<span class="t" style="top:294px;font-size:10.18px;left:952.40px;color:#3c88f8;">kbit</span>
<div class="b" style="left:1184.00px;top:79.30px;width:9.60px;height:226.80px;background:#f0f0f0;"></div>
<div class="b" style="left:1184.70px;top:89.60px;width:8.90px;height:9.00px;background:#c6c6c6;"></div>
<svg width="1200" height="596"><path d="M1186.7 85.4 l2.4 -2.4 l2.4 2.4 M1186.7 299.6 l2.4 2.4 l2.4 -2.4" fill="none" stroke="#5a5a5a" stroke-width="1"/></svg>
<div class="b" style="left:434.30px;top:335.60px;width:758.90px;height:26.20px;background:#404040;"></div>
<div class="b" style="left:434.30px;top:335.60px;width:758.90px;height:0.90px;background:#4e5660;"></div>
<div class="b" style="left:485.80px;top:336.20px;width:1.00px;height:25.00px;background:#5c5c5c;"></div>
<div class="b" style="left:542.00px;top:336.20px;width:1.00px;height:25.00px;background:#5c5c5c;"></div>
<div class="b" style="left:586.20px;top:336.20px;width:1.00px;height:25.00px;background:#5c5c5c;"></div>
<div class="b" style="left:629.80px;top:336.20px;width:1.00px;height:25.00px;background:#5c5c5c;"></div>
<div class="b" style="left:690.70px;top:336.20px;width:1.00px;height:25.00px;background:#5c5c5c;"></div>
<div class="b" style="left:772.50px;top:336.20px;width:1.00px;height:25.00px;background:#5c5c5c;"></div>
<div class="b" style="left:862.90px;top:336.20px;width:1.00px;height:25.00px;background:#5c5c5c;"></div>
<div class="b" style="left:907.20px;top:336.20px;width:1.00px;height:25.00px;background:#5c5c5c;"></div>
<div class="b" style="left:952.10px;top:336.20px;width:1.00px;height:25.00px;background:#5c5c5c;"></div>
<div class="b" style="left:996.90px;top:336.20px;width:1.00px;height:25.00px;background:#5c5c5c;"></div>
<span class="t" style="top:344px;font-size:10.5px;left:435.80px;color:#ffffff;">FramePart</span>
<span class="t" style="top:344px;font-size:10.5px;left:487.20px;color:#ffffff;">Allocation</span>
<span class="t" style="top:338px;font-size:10.5px;left:544.10px;color:#ffffff;">EVM</span>
<span class="t" style="top:350px;font-size:10.5px;left:544.10px;color:#ffffff;">(dB)</span>
<span class="t" style="top:338px;font-size:10.5px;left:588.00px;color:#ffffff;">Power</span>
<span class="t" style="top:350px;font-size:10.5px;left:588.00px;color:#ffffff;">(dBm)</span>
<span class="t" style="top:344px;font-size:10.5px;left:631.70px;color:#ffffff;">First Symbol</span>
<span class="t" style="top:344px;font-size:10.5px;left:692.20px;color:#ffffff;">Num. of Symbols</span>
<span class="t" style="top:344px;font-size:10.5px;left:774.50px;color:#ffffff;">Modulation Format</span>
<span class="t" style="top:344px;font-size:10.5px;left:864.70px;color:#ffffff;">BER</span>
<span class="t" style="top:338px;font-size:10.5px;left:908.60px;color:#ffffff;">Bit Errors</span>
<span class="t" style="top:350px;font-size:10.5px;left:908.60px;color:#ffffff;">(bit)</span>
<span class="t" style="top:338px;font-size:10.5px;left:954.00px;color:#ffffff;">Bit Count</span>
<span class="t" style="top:350px;font-size:10.5px;left:954.00px;color:#ffffff;">(bit)</span>
<span class="t" style="top:364px;font-size:10.4px;left:437.50px;color:#ffffff;">PLFrame</span>
<span class="t" style="top:364px;font-size:10.4px;left:551.81px;color:#ffffff;">-38.65</span>
<span class="t" style="top:364px;font-size:10.4px;left:601.59px;color:#ffffff;">-1.29</span>
<span class="t" style="top:364px;font-size:10.4px;left:673.86px;color:#ffffff;">***</span>
<span class="t" style="top:364px;font-size:10.4px;left:739.38px;color:#ffffff;">16686</span>
<span class="t" style="top:364px;font-size:10.4px;left:830.26px;color:#ffffff;">Mixed</span>
<span class="t" style="top:364px;font-size:10.4px;left:896.22px;color:#ffffff;">0</span>
<span class="t" style="top:364px;font-size:10.4px;left:942.22px;color:#ffffff;">0</span>
<span class="t" style="top:364px;font-size:10.4px;left:958.88px;color:#ffffff;">38.61 k</span>
<span class="t" style="top:378px;font-size:10.4px;left:515.92px;color:#ffffff;">SOF</span>
<span class="t" style="top:378px;font-size:10.4px;left:551.81px;color:#ffffff;">-38.44</span>
<span class="t" style="top:378px;font-size:10.4px;left:601.59px;color:#ffffff;">-1.22</span>
<span class="t" style="top:378px;font-size:10.4px;left:680.22px;color:#ffffff;">0</span>
<span class="t" style="top:378px;font-size:10.4px;left:756.73px;color:#ffffff;">26</span>
<span class="t" style="top:378px;font-size:10.4px;left:829.10px;color:#ffffff;">QPSK</span>
<span class="t" style="top:378px;font-size:10.4px;left:889.86px;color:#ffffff;">***</span>
<span class="t" style="top:378px;font-size:10.4px;left:935.86px;color:#ffffff;">***</span>
<span class="t" style="top:378px;font-size:10.4px;left:980.86px;color:#ffffff;">***</span>
<span class="t" style="top:392px;font-size:10.4px;left:487.59px;color:#ffffff;">PLSCODE</span>
<span class="t" style="top:392px;font-size:10.4px;left:551.81px;color:#ffffff;">-38.92</span>
<span class="t" style="top:392px;font-size:10.4px;left:601.59px;color:#ffffff;">-1.26</span>
<span class="t" style="top:392px;font-size:10.4px;left:674.43px;color:#ffffff;">26</span>
<span class="t" style="top:392px;font-size:10.4px;left:756.73px;color:#ffffff;">64</span>
<span class="t" style="top:392px;font-size:10.4px;left:829.10px;color:#ffffff;">QPSK</span>
<span class="t" style="top:392px;font-size:10.4px;left:889.86px;color:#ffffff;">***</span>
<span class="t" style="top:392px;font-size:10.4px;left:935.86px;color:#ffffff;">***</span>
<span class="t" style="top:392px;font-size:10.4px;left:980.86px;color:#ffffff;">***</span>
<span class="t" style="top:405px;font-size:10.4px;left:517.07px;color:#ffffff;">Pilot</span>
<span class="t" style="top:405px;font-size:10.4px;left:551.81px;color:#ffffff;">-38.70</span>
<span class="t" style="top:405px;font-size:10.4px;left:601.59px;color:#ffffff;">-1.33</span>
<span class="t" style="top:405px;font-size:10.4px;left:662.86px;color:#ffffff;">1530</span>
<span class="t" style="top:405px;font-size:10.4px;left:750.95px;color:#ffffff;">396</span>
<span class="t" style="top:405px;font-size:10.4px;left:829.10px;color:#ffffff;">QPSK</span>
<span class="t" style="top:405px;font-size:10.4px;left:889.86px;color:#ffffff;">***</span>
<span class="t" style="top:405px;font-size:10.4px;left:935.86px;color:#ffffff;">***</span>
<span class="t" style="top:405px;font-size:10.4px;left:980.86px;color:#ffffff;">***</span>
<span class="t" style="top:419px;font-size:10.4px;left:515.33px;color:#ffffff;">Data</span>
<span class="t" style="top:419px;font-size:10.4px;left:551.81px;color:#ffffff;">-38.65</span>
<span class="t" style="top:419px;font-size:10.4px;left:601.59px;color:#ffffff;">-1.29</span>
<span class="t" style="top:419px;font-size:10.4px;left:674.43px;color:#ffffff;">90</span>
<span class="t" style="top:419px;font-size:10.4px;left:739.38px;color:#ffffff;">16200</span>
<span class="t" style="top:419px;font-size:10.4px;left:830.25px;color:#ffffff;">APSK</span>
<span class="t" style="top:419px;font-size:10.4px;left:896.22px;color:#ffffff;">0</span>
<span class="t" style="top:419px;font-size:10.4px;left:942.22px;color:#ffffff;">0</span>
<span class="t" style="top:419px;font-size:10.4px;left:958.88px;color:#ffffff;">38.61 k</span>
<div class="b" style="left:434.30px;top:479.80px;width:758.90px;height:26.50px;background:#404040;"></div>
<div class="b" style="left:434.30px;top:479.80px;width:758.90px;height:0.90px;background:#4e5660;"></div>
<div class="b" style="left:478.20px;top:480.40px;width:1.00px;height:25.30px;background:#5c5c5c;"></div>
<div class="b" style="left:522.10px;top:480.40px;width:1.00px;height:25.30px;background:#5c5c5c;"></div>
<div class="b" style="left:566.20px;top:480.40px;width:1.00px;height:25.30px;background:#5c5c5c;"></div>
<div class="b" style="left:628.10px;top:480.40px;width:1.00px;height:25.30px;background:#5c5c5c;"></div>
<div class="b" style="left:672.10px;top:480.40px;width:1.00px;height:25.30px;background:#5c5c5c;"></div>
<div class="b" style="left:745.60px;top:480.40px;width:1.00px;height:25.30px;background:#5c5c5c;"></div>
<div class="b" style="left:792.10px;top:480.40px;width:1.00px;height:25.30px;background:#5c5c5c;"></div>
<div class="b" style="left:850.60px;top:480.40px;width:1.00px;height:25.30px;background:#5c5c5c;"></div>
<div class="b" style="left:899.60px;top:480.40px;width:1.00px;height:25.30px;background:#5c5c5c;"></div>
<div class="b" style="left:957.10px;top:480.40px;width:1.00px;height:25.30px;background:#5c5c5c;"></div>
<div class="b" style="left:1001.10px;top:480.40px;width:1.00px;height:25.30px;background:#5c5c5c;"></div>
<div class="b" style="left:1046.60px;top:480.40px;width:1.00px;height:25.30px;background:#5c5c5c;"></div>
<div class="b" style="left:1090.60px;top:480.40px;width:1.00px;height:25.30px;background:#5c5c5c;"></div>
<span class="t" style="top:488px;font-size:10.5px;left:435.80px;color:#ffffff;">Carrier</span>
<span class="t" style="top:482px;font-size:10.5px;left:479.70px;color:#ffffff;">Center</span>
<span class="t" style="top:494px;font-size:10.5px;left:479.70px;color:#ffffff;">(Hz)</span>
<span class="t" style="top:482px;font-size:10.5px;left:523.70px;color:#ffffff;">Offset</span>
<span class="t" style="top:494px;font-size:10.5px;left:523.70px;color:#ffffff;">(Hz)</span>
<span class="t" style="top:482px;font-size:10.5px;left:567.70px;color:#ffffff;">Symbol Rate</span>
<span class="t" style="top:494px;font-size:10.5px;left:567.70px;color:#ffffff;">(Hz)</span>
<span class="t" style="top:482px;font-size:10.5px;left:629.60px;color:#ffffff;">EVM</span>
<span class="t" style="top:494px;font-size:10.5px;left:629.60px;color:#ffffff;">(dB)</span>
<span class="t" style="top:482px;font-size:10.5px;left:673.40px;color:#ffffff;">Channel Power</span>
<span class="t" style="top:494px;font-size:10.5px;left:673.40px;color:#ffffff;">(dBm)</span>
<span class="t" style="top:482px;font-size:10.5px;left:747.10px;color:#ffffff;">Freq Err</span>
<span class="t" style="top:494px;font-size:10.5px;left:747.10px;color:#ffffff;">(Hz)</span>
<span class="t" style="top:482px;font-size:10.5px;left:793.40px;color:#ffffff;">Sym Clk Err</span>
<span class="t" style="top:494px;font-size:10.5px;left:793.40px;color:#ffffff;">(ppm)</span>
<span class="t" style="top:482px;font-size:10.5px;left:851.40px;color:#ffffff;">Mag Error</span>
<span class="t" style="top:494px;font-size:10.5px;left:851.40px;color:#ffffff;">(%)</span>
<span class="t" style="top:482px;font-size:10.5px;left:900.40px;color:#ffffff;">Phase Error</span>
<span class="t" style="top:494px;font-size:10.5px;left:900.40px;color:#ffffff;">(deg)</span>
<span class="t" style="top:488px;font-size:10.5px;left:958.60px;color:#ffffff;">BER</span>
<span class="t" style="top:482px;font-size:10.5px;left:1002.60px;color:#ffffff;">Bit Errors</span>
<span class="t" style="top:494px;font-size:10.5px;left:1002.60px;color:#ffffff;">(bit)</span>
<span class="t" style="top:482px;font-size:10.5px;left:1048.00px;color:#ffffff;">Bit Count</span>
<span class="t" style="top:494px;font-size:10.5px;left:1048.00px;color:#ffffff;">(bit)</span>
<span class="t" style="top:508px;font-size:10.4px;left:452.19px;color:#ffffff;">CC0</span>
<span class="t" style="top:508px;font-size:10.4px;left:494.95px;color:#ffffff;">10 G</span>
<span class="t" style="top:508px;font-size:10.4px;left:555.52px;color:#ffffff;">0</span>
<span class="t" style="top:508px;font-size:10.4px;left:594.69px;color:#ffffff;">400 M</span>
<span class="t" style="top:508px;font-size:10.4px;left:637.51px;color:#ffffff;">-38.65</span>
<span class="t" style="top:508px;font-size:10.4px;left:717.09px;color:#ffffff;">-1.29</span>
<span class="t" style="top:508px;font-size:10.4px;left:750.02px;color:#ffffff;">991.1 m</span>
<span class="t" style="top:508px;font-size:10.4px;left:810.04px;color:#ffffff;">-18.1 m</span>
<span class="t" style="top:508px;font-size:10.4px;left:867.97px;color:#ffffff;">0.797</span>
<span class="t" style="top:508px;font-size:10.4px;left:923.09px;color:#ffffff;">866 m</span>
<span class="t" style="top:508px;font-size:10.4px;left:990.42px;color:#ffffff;">0</span>
<span class="t" style="top:508px;font-size:10.4px;left:1036.22px;color:#ffffff;">0</span>
<span class="t" style="top:508px;font-size:10.4px;left:1052.88px;color:#ffffff;">772.2 k</span>
<div class="b" style="left:0.00px;top:575.50px;width:1200.00px;height:20.50px;background:#007acc;"></div>
<svg width="1200" height="596"><path d="M10.8 584.4 l3.2 -3.6 l3.2 3.6z M10.8 587.6 l3.2 3.6 l3.2 -3.6z" fill="#fff"/></svg>
<span class="t" style="top:581px;font-size:10.8px;transform:scaleX(0.8449);left:23.00px;color:#fff;">Meas01:</span>
<span class="t" style="top:581px;font-size:10.8px;transform:scaleX(0.8851);left:65.00px;color:#fff;">Average Complete</span>
<div class="b" style="left:959.50px;top:575.50px;width:1.50px;height:20.50px;background:#58a8e8;"></div>
<span class="t" style="top:581px;font-size:10.8px;transform:scaleX(0.8449);left:970.00px;color:#fff;">Meas01:</span>
<span class="t" style="top:581px;font-size:10.8px;transform:scaleX(0.7487);left:1013.50px;color:#fff;">EXT REF</span>
<svg width="1200" height="596"><path d="M1057.3 584.4 l3.2 -3.6 l3.2 3.6z M1057.3 587.6 l3.2 3.6 l3.2 -3.6z" fill="#fff"/></svg>
<div class="b" style="left:1074.50px;top:575.50px;width:1.50px;height:20.50px;background:#58a8e8;"></div>
<div class="b" style="left:1078.00px;top:575.50px;width:1.50px;height:20.50px;background:#58a8e8;"></div>
<span class="t" style="top:581px;font-size:10.8px;transform:scaleX(0.8449);left:1086.00px;color:#fff;">Meas01:</span>
<span class="t" style="top:581px;font-size:10.8px;transform:scaleX(0.8096);left:1133.50px;color:#fff;">CAL: OK</span>
<svg width="1200" height="596"><path d="M1182.3 584.4 l3.2 -3.6 l3.2 3.6z M1182.3 587.6 l3.2 3.6 l3.2 -3.6z" fill="#fff"/></svg>
</body></html>
